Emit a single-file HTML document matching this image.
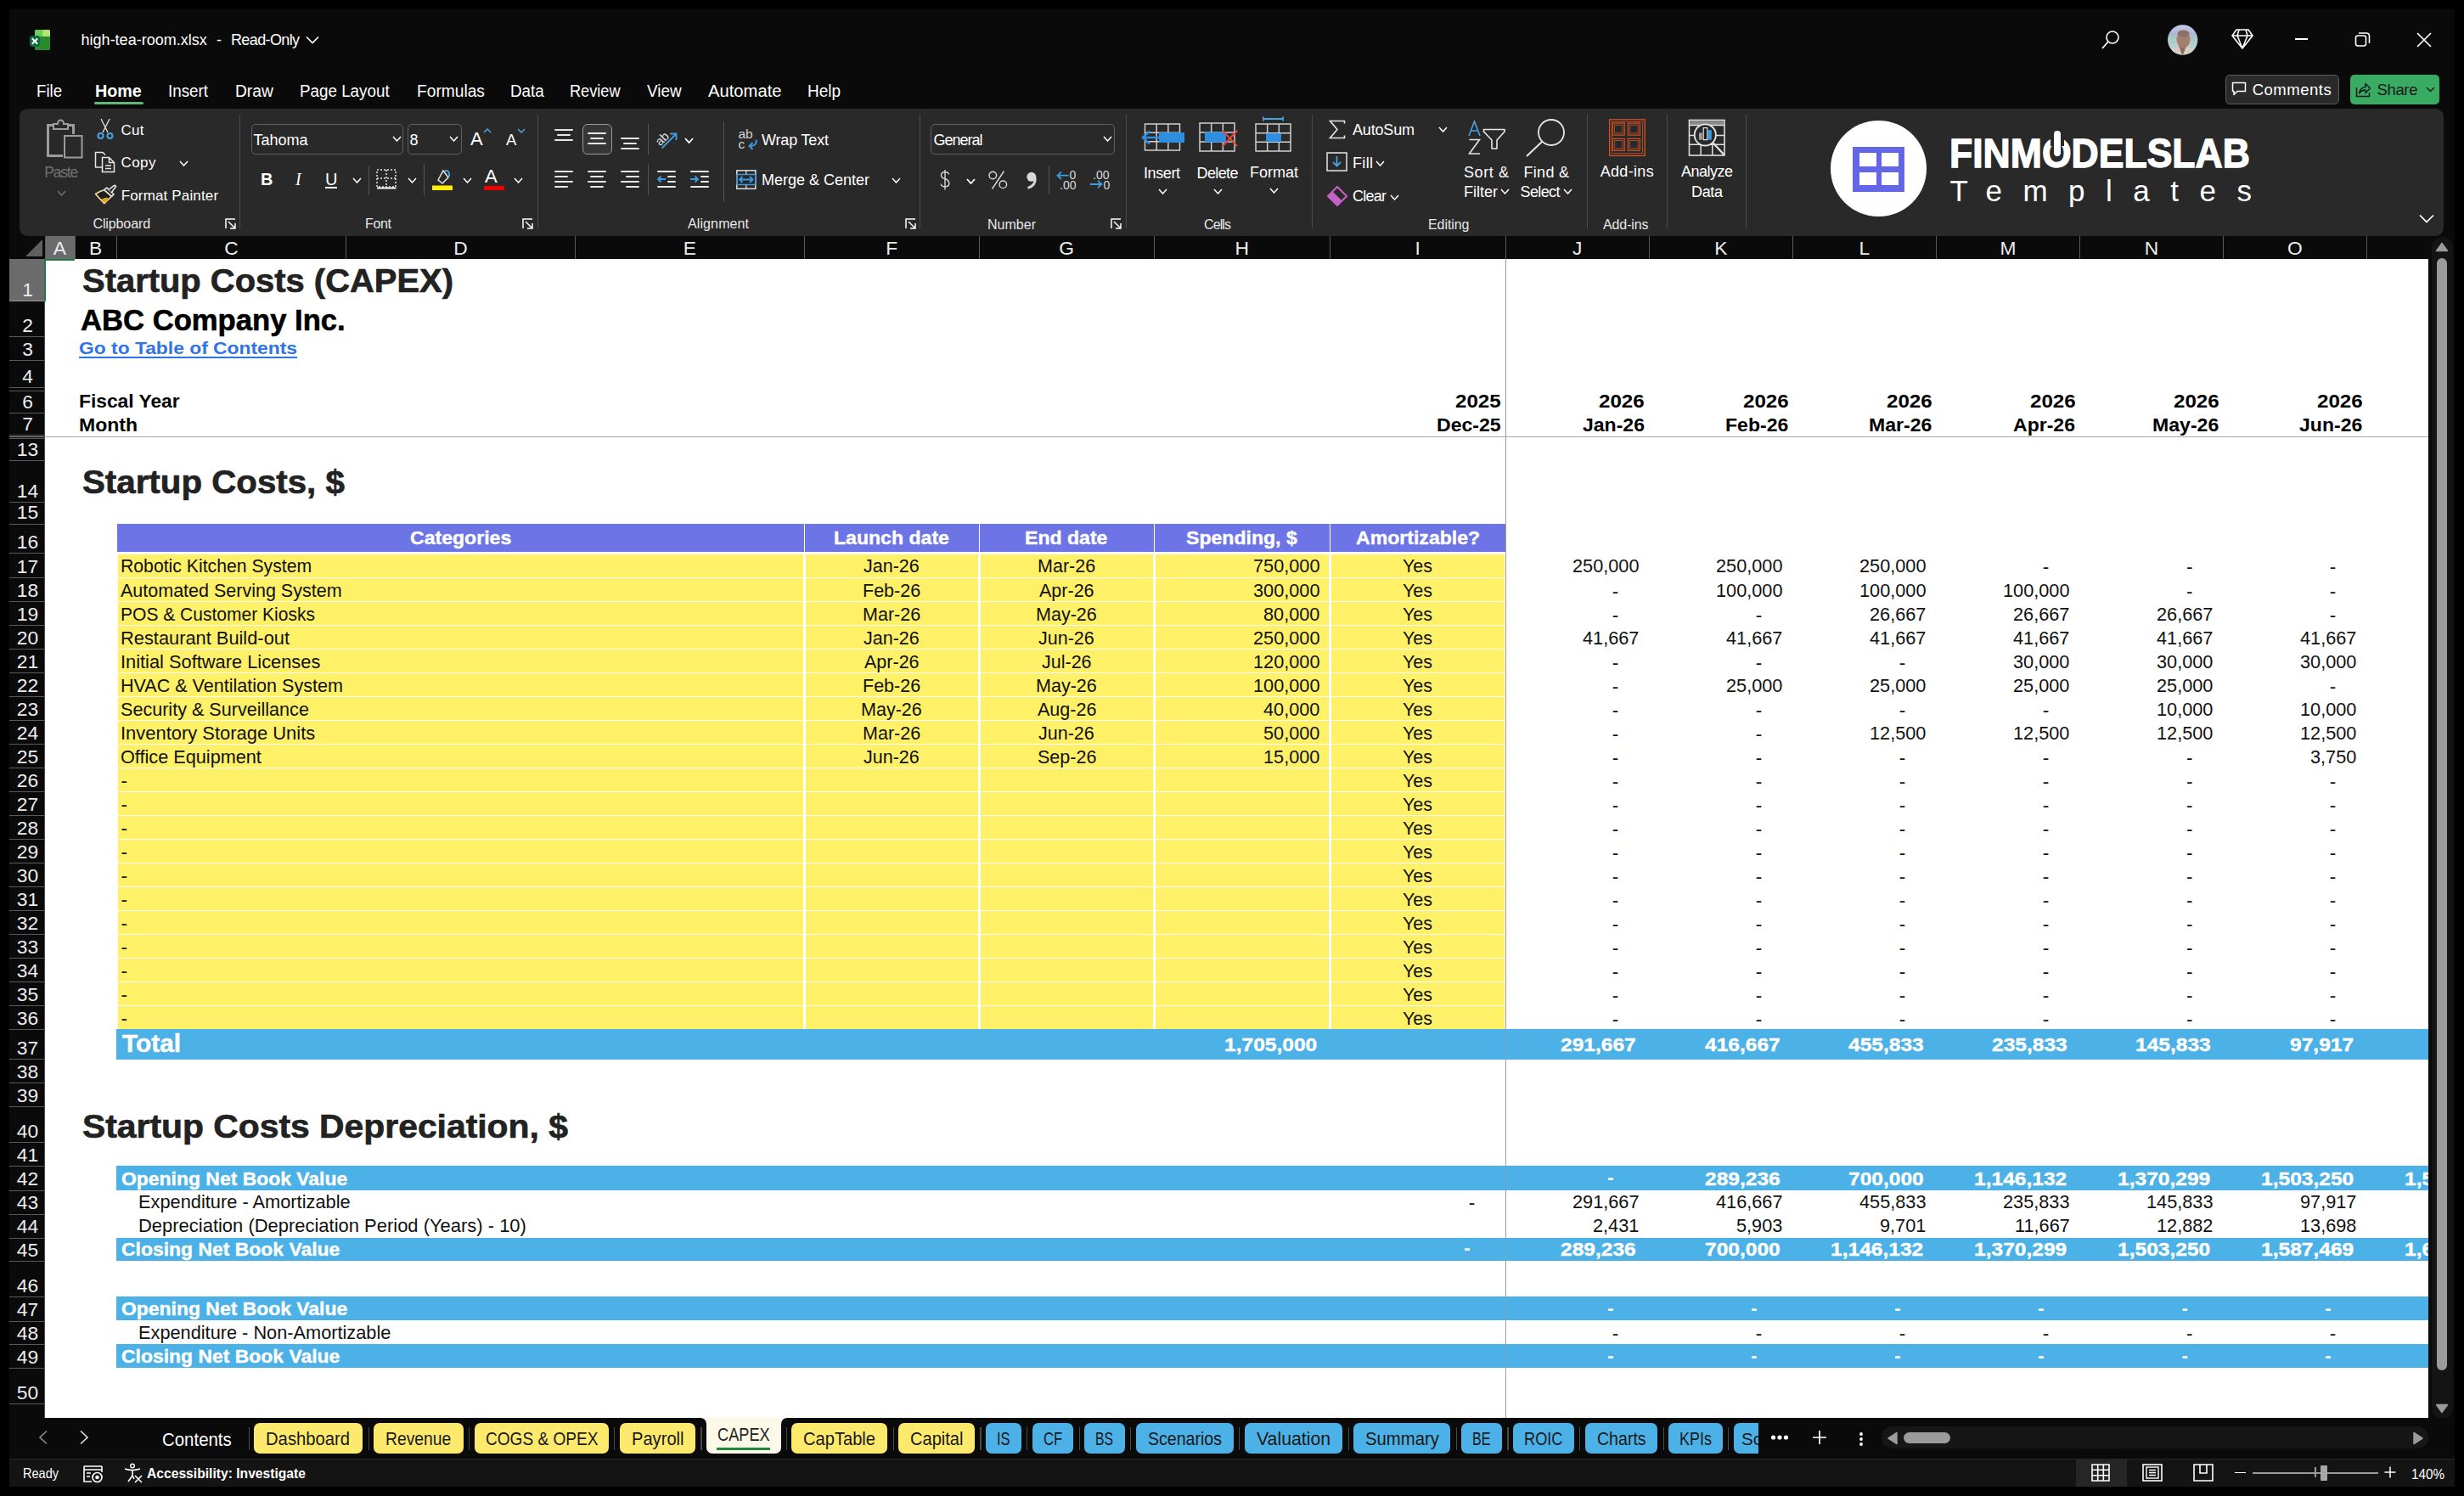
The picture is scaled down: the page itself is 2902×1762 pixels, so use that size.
<!DOCTYPE html>
<html><head><meta charset="utf-8"><title>high-tea-room.xlsx</title>
<style>
html,body{margin:0;padding:0;width:2902px;height:1762px;overflow:hidden;background:#000;}
body{position:relative;font-family:"Liberation Sans",sans-serif;}
div,svg{position:absolute;box-sizing:border-box;}
.t{white-space:pre;line-height:1;}
</style></head><body>
<div style="left:11px;top:11px;width:2880px;height:1740px;background:#0a0a0a;"></div>
<svg style="left:34px;top:34px;" width="26" height="26" viewBox="0 0 26 26">
<rect x="7" y="1" width="18" height="24" rx="2" fill="#21a366"/>
<rect x="7" y="1" width="9" height="8" rx="1.5" fill="#6ad05a"/>
<rect x="16" y="1" width="9" height="8" rx="1.5" fill="#b6e56a"/>
<rect x="7" y="9" width="18" height="16" rx="1.5" fill="#2a8a2e"/>
<rect x="1" y="8" width="12" height="13" rx="3" fill="#0e6b3c"/>
<path d="M3.8 11.2 L10.2 17.8 M10.2 11.2 L3.8 17.8" stroke="#fff" stroke-width="2"/>
</svg>
<div class="t" style="top:38.3px;font-size:18px;color:#fff;letter-spacing:-0px;left:95.6px;">high-tea-room.xlsx</div>
<div class="t" style="top:38.3px;font-size:18px;color:#fff;left:255px;">-</div>
<div class="t" style="top:38.3px;font-size:18px;color:#fff;letter-spacing:-0.63px;left:272px;">Read-Only</div>
<svg style="left:360px;top:42px;" width="16" height="10" viewBox="0 0 16 10"><path d="M1 1.5 L8 8.5 L15 1.5" stroke="#fff" stroke-width="1.6" fill="none"/></svg>
<svg style="left:2474px;top:35px;" width="24" height="24" viewBox="0 0 24 24"><circle cx="14" cy="9" r="7" stroke="#fff" stroke-width="1.6" fill="none"/><path d="M9 14 L2 22" stroke="#fff" stroke-width="1.8"/></svg>
<svg style="left:2552px;top:29px;" width="37" height="37" viewBox="0 0 37 37"><defs><clipPath id="avc"><circle cx="18.7" cy="17.9" r="17.7"/></clipPath><linearGradient id="av" x1="0" y1="0" x2="0" y2="1"><stop offset="0" stop-color="#c8cce6"/><stop offset="0.3" stop-color="#a9b6d8"/><stop offset="0.36" stop-color="#a6c4c8"/><stop offset="1" stop-color="#c9dcd8"/></linearGradient></defs>
<g clip-path="url(#avc)"><rect width="37" height="37" fill="url(#av)"/><path d="M2 37 Q6 27 14 26 L24 26 Q32 28 36 37 Z" fill="#d8cec4"/><path d="M14 25 L18.5 37 L23 25 Z" fill="#8a6a5c"/><ellipse cx="19.5" cy="17.5" rx="8" ry="10" fill="#a47f70"/><ellipse cx="19.5" cy="10.5" rx="7" ry="4" fill="#8c7068"/></g></svg>
<svg style="left:2628px;top:33px;" width="26" height="26" viewBox="0 0 26 26"><path d="M6 2 H20 L25 9 L13 24 L1 9 Z M1 9 H25 M9 2 L7 9 L13 24 L19 9 L17 2" stroke="#fff" stroke-width="1.6" fill="none" stroke-linejoin="round"/></svg>
<div style="left:2703px;top:45px;width:15px;height:1.8px;background:#fff;"></div>
<svg style="left:2773px;top:37px;" width="19" height="19" viewBox="0 0 19 19"><rect x="1.5" y="5" width="12" height="12" rx="2.5" stroke="#fff" stroke-width="1.6" fill="none"/><path d="M5 2 H14 Q17.5 2 17.5 5.5 V14" stroke="#fff" stroke-width="1.6" fill="none"/></svg>
<svg style="left:2846px;top:38px;" width="18" height="18" viewBox="0 0 18 18"><path d="M1 1 L17 17 M17 1 L1 17" stroke="#fff" stroke-width="1.7"/></svg>
<div class="t" style="top:98.42px;font-size:19.5px;color:#fff;transform:scaleX(0.9556);transform-origin:0 0;left:42.6px;">File</div>
<div class="t" style="top:98.42px;font-size:19.5px;color:#fff;font-weight:700;transform:scaleX(1.0109);transform-origin:0 0;left:111.6px;">Home</div>
<div class="t" style="top:98.42px;font-size:19.5px;color:#fff;transform:scaleX(0.9641);transform-origin:0 0;left:198px;">Insert</div>
<div class="t" style="top:98.42px;font-size:19.5px;color:#fff;transform:scaleX(0.9839);transform-origin:0 0;left:277px;">Draw</div>
<div class="t" style="top:98.42px;font-size:19.5px;color:#fff;transform:scaleX(0.9644);transform-origin:0 0;left:353px;">Page Layout</div>
<div class="t" style="top:98.42px;font-size:19.5px;color:#fff;transform:scaleX(0.9838);transform-origin:0 0;left:491px;">Formulas</div>
<div class="t" style="top:98.42px;font-size:19.5px;color:#fff;transform:scaleX(0.9650);transform-origin:0 0;left:600.6px;">Data</div>
<div class="t" style="top:98.42px;font-size:19.5px;color:#fff;transform:scaleX(0.9318);transform-origin:0 0;left:670.9px;">Review</div>
<div class="t" style="top:98.42px;font-size:19.5px;color:#fff;transform:scaleX(0.9684);transform-origin:0 0;left:762px;">View</div>
<div class="t" style="top:98.42px;font-size:19.5px;color:#fff;transform:scaleX(1.0364);transform-origin:0 0;left:834px;">Automate</div>
<div class="t" style="top:98.42px;font-size:19.5px;color:#fff;transform:scaleX(0.9732);transform-origin:0 0;left:951px;">Help</div>
<div style="left:111px;top:120px;width:57.5px;height:3px;background:#5fb77c;border-radius:2px;"></div>
<div style="left:2621px;top:87.5px;width:134px;height:35px;background:#2a2a2a;border:1px solid #5c5c5c;border-radius:5px;"></div>
<svg style="left:2628px;top:96px;" width="19" height="18" viewBox="0 0 19 18"><path d="M1.5 1.5 H16.5 V11.5 H7 L3 15.5 V11.5 H1.5 Z" stroke="#fff" stroke-width="1.5" fill="none" stroke-linejoin="round"/></svg>
<div class="t" style="top:96.88px;font-size:18.5px;color:#fff;letter-spacing:0.51px;left:2652.7px;">Comments</div>
<div style="left:2768px;top:87.5px;width:105px;height:35px;background:#3aab62;border-radius:5px;"></div>
<svg style="left:2774px;top:96px;" width="19" height="19" viewBox="0 0 19 19"><path d="M1.5 7 V17.5 H16.5 V13" stroke="#1a1a1a" stroke-width="1.5" fill="none"/><path d="M4.5 14 Q6 7 12 6.5 V2.5 L17.5 8 L12 13.5 V10 Q7.5 10 4.5 14 Z" stroke="#1a1a1a" stroke-width="1.5" fill="none" stroke-linejoin="round"/></svg>
<div class="t" style="top:96.88px;font-size:18.5px;color:#1a1a1a;letter-spacing:-0.35px;left:2799.5px;">Share</div>
<svg style="left:2857px;top:102px;" width="11" height="7" viewBox="0 0 11 7"><path d="M1 1 L5.5 5.5 L10 1" stroke="#1a1a1a" stroke-width="1.5" fill="none"/></svg>
<div style="left:23px;top:128.3px;width:2855.4px;height:149.4px;background:#292929;border-radius:9px;"></div>
<svg style="left:54px;top:140px;" width="44" height="48" viewBox="0 0 44 48">
<path d="M2.5 7.5 H8.5 M25.5 7.5 H32.5 V18" stroke="#9c9c9c" stroke-width="3" fill="none"/>
<path d="M2.5 6 V43.5 H20" stroke="#9c9c9c" stroke-width="3" fill="none"/>
<path d="M9 12 V6 H14 Q14 1.5 17.5 1.5 Q21 1.5 21 6 H26 V12 Z" stroke="#9c9c9c" stroke-width="2" fill="#292929"/>
<rect x="22" y="20" width="20.5" height="25.5" stroke="#9c9c9c" stroke-width="2" fill="#292929"/></svg>
<div class="t" style="top:195.32px;font-size:17.5px;color:#717171;letter-spacing:-1.18px;left:52.2px;">Paste</div>
<svg style="left:66.5px;top:223.5px;" width="11" height="7" viewBox="0 0 11 7"><path d="M1 1 L5.5 6 L10 1" stroke="#717171" stroke-width="1.5" fill="none"/></svg>
<svg style="left:113px;top:138px;" width="22" height="28" viewBox="0 0 22 28"><path d="M6 2 L14 18 M16 2 L8 18" stroke="#e6e6e6" stroke-width="1.3"/>
<circle cx="5.5" cy="22" r="3" stroke="#4aa3e2" stroke-width="2" fill="none"/><circle cx="16.5" cy="22" r="3" stroke="#4aa3e2" stroke-width="2" fill="none"/></svg>
<div class="t" style="top:145.35px;font-size:17px;color:#fff;letter-spacing:0.28px;left:142.5px;">Cut</div>
<svg style="left:111px;top:178px;" width="26" height="27" viewBox="0 0 26 27"><path d="M10 19 H1.5 V1.5 H10 L13 4.5" stroke="#e6e6e6" stroke-width="1.5" fill="none"/>
<path d="M9.5 7.5 H17.5 L23.5 13.5 V24.5 H9.5 Z M17.5 7.5 V13.5 H23.5 M13 17 H20 M13 20.5 H20" stroke="#e6e6e6" stroke-width="1.5" fill="none"/></svg>
<div class="t" style="top:182.55px;font-size:17px;color:#fff;letter-spacing:0.43px;left:142.5px;">Copy</div>
<svg style="left:210.5px;top:189px;" width="11" height="7" viewBox="0 0 11 7"><path d="M1 1 L5.5 6 L10 1" stroke="#fff" stroke-width="1.5" fill="none"/></svg>
<svg style="left:111px;top:217px;" width="27" height="25" viewBox="0 0 27 25"><path d="M1.5 11.5 Q7 7.8 11.8 6.8 L20.5 14.2 L11.8 22.6 Z" stroke="#f7e09a" stroke-width="1.6" fill="#1e1e1e" stroke-linejoin="round"/>
<path d="M8.5 17.5 L14.5 15.5 L17.5 17.5 L12 22 Z" fill="#e9a12a"/>
<path d="M11.8 6.5 L14.8 4.2 L23 12 L20.5 14.4 Z" stroke="#e6e6e6" stroke-width="1.6" fill="#292929" stroke-linejoin="round"/>
<path d="M17 6.5 L22.8 1.8 Q24.8 0.6 25.6 2.6 L20.2 9.8" stroke="#e6e6e6" stroke-width="1.6" fill="#292929" stroke-linejoin="round"/></svg>
<div class="t" style="top:222.05px;font-size:17px;color:#fff;letter-spacing:0.15px;left:142.7px;">Format Painter</div>
<div class="t" style="top:256.4px;font-size:16px;color:#e8e8e8;letter-spacing:-0.12px;left:109.5px;">Clipboard</div>
<svg style="left:264.5px;top:256.5px;" width="14" height="13" viewBox="0 0 14 13"><path d="M1 12 V1 H12" stroke="#fff" stroke-width="1.5" fill="none"/><path d="M4 4 L12 12 M6 12 H12 V6" stroke="#fff" stroke-width="1.5" fill="none"/></svg>
<div style="left:282px;top:135px;width:1px;height:134px;background:#4c4c4c;"></div>
<div style="left:295.5px;top:146px;width:179.5px;height:35.5px;background:transparent;border:1px solid #616161;border-radius:5px;"></div>
<div class="t" style="top:156px;font-size:18px;color:#fff;letter-spacing:-0.02px;left:298.5px;">Tahoma</div>
<svg style="left:462px;top:160px;" width="11" height="7" viewBox="0 0 11 7"><path d="M1 1 L5.5 6 L10 1" stroke="#fff" stroke-width="1.5" fill="none"/></svg>
<div style="left:479.5px;top:146px;width:64px;height:35.5px;background:transparent;border:1px solid #616161;border-radius:5px;"></div>
<div class="t" style="top:156px;font-size:18px;color:#fff;left:482.5px;">8</div>
<svg style="left:529px;top:160px;" width="11" height="7" viewBox="0 0 11 7"><path d="M1 1 L5.5 6 L10 1" stroke="#fff" stroke-width="1.5" fill="none"/></svg>
<div class="t" style="top:153.3px;font-size:22px;color:#fff;left:554px;">A</div>
<svg style="left:569px;top:151px;" width="10" height="6" viewBox="0 0 10 6"><path d="M1 5 L5 1 L9 5" stroke="#4aa3e2" stroke-width="1.5" fill="none"/></svg>
<div class="t" style="top:156.28px;font-size:18.5px;color:#fff;left:596px;">A</div>
<svg style="left:609px;top:151px;" width="10" height="6" viewBox="0 0 10 6"><path d="M1 1 L5 5 L9 1" stroke="#4aa3e2" stroke-width="1.5" fill="none"/></svg>
<div class="t" style="top:201.2px;font-size:20px;color:#fff;font-weight:700;left:307px;">B</div>
<div class="t" style="top:201.2px;font-size:20px;color:#fff;left:348px;font-style:italic;font-family:\"Liberation Serif\",serif;">I</div>
<div class="t" style="top:201.2px;font-size:20px;color:#fff;left:383px;">U</div>
<div style="left:382.5px;top:220px;width:14.5px;height:1.6px;background:#fff;"></div>
<svg style="left:414.5px;top:208.5px;" width="11" height="7" viewBox="0 0 11 7"><path d="M1 1 L5.5 6 L10 1" stroke="#fff" stroke-width="1.5" fill="none"/></svg>
<div style="left:434px;top:194.5px;width:1px;height:35.5px;background:#555;"></div>
<svg style="left:443px;top:199px;" width="25" height="24" viewBox="0 0 25 24"><path d="M1 1 H23 V21 H1 Z M12 1 V21 M1 11 H23" stroke="#e6e6e6" stroke-width="1.5" stroke-dasharray="2 2" fill="none"/><path d="M1 22.5 H23.5" stroke="#fff" stroke-width="2"/></svg>
<svg style="left:479.5px;top:208.5px;" width="11" height="7" viewBox="0 0 11 7"><path d="M1 1 L5.5 6 L10 1" stroke="#fff" stroke-width="1.5" fill="none"/></svg>
<div style="left:499px;top:193px;width:1px;height:37px;background:#555;"></div>
<svg style="left:507px;top:196px;" width="30" height="30" viewBox="0 0 30 30"><path d="M9 16 L15 5 L21 13 L14 20 Z" stroke="#e6e6e6" stroke-width="1.5" fill="none"/><path d="M17 5 Q23 4 22 12" stroke="#4aa3e2" stroke-width="2" fill="none"/><rect x="2" y="22.5" width="24" height="5.5" fill="#ffee00"/></svg>
<svg style="left:544.5px;top:208.5px;" width="11" height="7" viewBox="0 0 11 7"><path d="M1 1 L5.5 6 L10 1" stroke="#fff" stroke-width="1.5" fill="none"/></svg>
<div class="t" style="top:197.3px;font-size:22px;color:#fff;left:571px;">A</div>
<div style="left:570px;top:218.5px;width:24px;height:5.5px;background:#e00;"></div>
<svg style="left:605px;top:208.5px;" width="11" height="7" viewBox="0 0 11 7"><path d="M1 1 L5.5 6 L10 1" stroke="#fff" stroke-width="1.5" fill="none"/></svg>
<div class="t" style="top:256.4px;font-size:16px;color:#e8e8e8;letter-spacing:-0.33px;left:430px;">Font</div>
<svg style="left:615px;top:256.5px;" width="14" height="13" viewBox="0 0 14 13"><path d="M1 12 V1 H12" stroke="#fff" stroke-width="1.5" fill="none"/><path d="M4 4 L12 12 M6 12 H12 V6" stroke="#fff" stroke-width="1.5" fill="none"/></svg>
<div style="left:633px;top:135px;width:1px;height:134px;background:#4c4c4c;"></div>
<div style="left:685.5px;top:146.2px;width:35.3px;height:35.4px;background:#363636;border:1px solid #9a9a9a;border-radius:6px;"></div>
<div style="left:653.2px;top:152.1px;width:21.6px;height:1.7px;background:#e6e6e6;border-radius:1px;"></div>
<div style="left:656.3px;top:158.1px;width:15.6px;height:1.7px;background:#e6e6e6;border-radius:1px;"></div>
<div style="left:653.2px;top:164.1px;width:21.6px;height:1.7px;background:#e6e6e6;border-radius:1px;"></div>
<div style="left:692.2px;top:156.3px;width:21.6px;height:1.7px;background:#e6e6e6;border-radius:1px;"></div>
<div style="left:695.3px;top:162.3px;width:15.6px;height:1.7px;background:#e6e6e6;border-radius:1px;"></div>
<div style="left:692.2px;top:168.3px;width:21.6px;height:1.7px;background:#e6e6e6;border-radius:1px;"></div>
<div style="left:731.2px;top:162.3px;width:21.6px;height:1.7px;background:#e6e6e6;border-radius:1px;"></div>
<div style="left:734.3px;top:168.3px;width:15.6px;height:1.7px;background:#e6e6e6;border-radius:1px;"></div>
<div style="left:731.2px;top:174.4px;width:21.6px;height:1.7px;background:#e6e6e6;border-radius:1px;"></div>
<div style="left:763px;top:146px;width:1px;height:35.5px;background:#555;"></div>
<svg style="left:770px;top:150px;" width="30" height="28" viewBox="0 0 30 28"><g transform="rotate(-45 11 12)"><text x="1" y="17" font-size="14.5" fill="#e0e0e0" font-family="Liberation Sans">ab</text></g><path d="M9.5 24.5 L26 8 M19 7.5 H26.5 V15" stroke="#3d9be0" stroke-width="1.9" fill="none"/></svg>
<svg style="left:806px;top:162px;" width="11" height="7" viewBox="0 0 11 7"><path d="M1 1 L5.5 6 L10 1" stroke="#fff" stroke-width="1.8" fill="none"/></svg>
<div style="left:653.2px;top:201.2px;width:21.6px;height:1.7px;background:#e6e6e6;border-radius:1px;"></div>
<div style="left:653.2px;top:207.2px;width:16px;height:1.7px;background:#e6e6e6;border-radius:1px;"></div>
<div style="left:653.2px;top:213.3px;width:21.6px;height:1.7px;background:#e6e6e6;border-radius:1px;"></div>
<div style="left:653.2px;top:219.3px;width:16px;height:1.7px;background:#e6e6e6;border-radius:1px;"></div>
<div style="left:692.2px;top:201.2px;width:21.6px;height:1.7px;background:#e6e6e6;border-radius:1px;"></div>
<div style="left:695.1px;top:207.2px;width:15.8px;height:1.7px;background:#e6e6e6;border-radius:1px;"></div>
<div style="left:692.2px;top:213.3px;width:21.6px;height:1.7px;background:#e6e6e6;border-radius:1px;"></div>
<div style="left:695.1px;top:219.3px;width:15.8px;height:1.7px;background:#e6e6e6;border-radius:1px;"></div>
<div style="left:731.2px;top:201.2px;width:21.6px;height:1.7px;background:#e6e6e6;border-radius:1px;"></div>
<div style="left:736.8px;top:207.2px;width:16px;height:1.7px;background:#e6e6e6;border-radius:1px;"></div>
<div style="left:731.2px;top:213.3px;width:21.6px;height:1.7px;background:#e6e6e6;border-radius:1px;"></div>
<div style="left:736.8px;top:219.3px;width:16px;height:1.7px;background:#e6e6e6;border-radius:1px;"></div>
<div style="left:763px;top:193px;width:1px;height:37px;background:#555;"></div>
<div style="left:774.2px;top:201.2px;width:21.6px;height:1.7px;background:#e6e6e6;border-radius:1px;"></div>
<div style="left:786.4px;top:207.2px;width:9.4px;height:1.7px;background:#e6e6e6;border-radius:1px;"></div>
<div style="left:786.4px;top:213.3px;width:9.4px;height:1.7px;background:#e6e6e6;border-radius:1px;"></div>
<div style="left:774.2px;top:219.3px;width:21.6px;height:1.7px;background:#e6e6e6;border-radius:1px;"></div>
<svg style="left:773px;top:206px;" width="12" height="10" viewBox="0 0 12 10"><path d="M11 5 H2 M5.5 1.5 L2 5 L5.5 8.5" stroke="#3d9be0" stroke-width="1.9" fill="none"/></svg>
<div style="left:813.2px;top:201.2px;width:21.6px;height:1.7px;background:#e6e6e6;border-radius:1px;"></div>
<div style="left:825.3px;top:207.2px;width:9.6px;height:1.7px;background:#e6e6e6;border-radius:1px;"></div>
<div style="left:825.3px;top:213.3px;width:9.6px;height:1.7px;background:#e6e6e6;border-radius:1px;"></div>
<div style="left:813.2px;top:219.3px;width:21.6px;height:1.7px;background:#e6e6e6;border-radius:1px;"></div>
<svg style="left:811.5px;top:206px;" width="12" height="10" viewBox="0 0 12 10"><path d="M1 5 H10 M6.5 1.5 L10 5 L6.5 8.5" stroke="#3d9be0" stroke-width="1.9" fill="none"/></svg>
<div style="left:851.5px;top:143px;width:1px;height:95px;background:#555;"></div>
<svg style="left:867px;top:148px;" width="28" height="30" viewBox="0 0 28 30"><text x="2.5" y="15.2" font-size="15.5" fill="#d6d6d6" font-family="Liberation Sans">ab</text><text x="2.5" y="26.5" font-size="15.5" fill="#d6d6d6" font-family="Liberation Sans">c</text><path d="M23.5 16.5 Q25 24 16 24 M19.5 20 L15.5 24 L19.5 28" stroke="#3d9be0" stroke-width="1.9" fill="none"/></svg>
<div class="t" style="top:155.7px;font-size:18px;color:#fff;letter-spacing:-0.17px;left:897px;">Wrap Text</div>
<svg style="left:866px;top:199px;" width="26" height="25" viewBox="0 0 26 25"><rect x="1.8" y="1.8" width="22" height="21.5" stroke="#d6d6d6" stroke-width="1.6" fill="none"/><path d="M12.8 1.8 V6 M12.8 18.5 V23" stroke="#d6d6d6" stroke-width="1.4"/><path d="M1.8 6.5 H23.8 M1.8 18.5 H23.8" stroke="#3d9be0" stroke-width="1.6"/><path d="M1.8 6.5 V18.5 M23.8 6.5 V18.5" stroke="#3d9be0" stroke-width="1.6"/><path d="M5 12.5 H20.5 M8.5 9 L5 12.5 L8.5 16 M17 9 L20.5 12.5 L17 16" stroke="#3d9be0" stroke-width="1.8" fill="none"/></svg>
<div class="t" style="top:203.2px;font-size:18px;color:#fff;letter-spacing:-0.01px;left:897px;">Merge &amp; Center</div>
<svg style="left:1049.5px;top:208.5px;" width="11" height="7" viewBox="0 0 11 7"><path d="M1 1 L5.5 6 L10 1" stroke="#fff" stroke-width="1.5" fill="none"/></svg>
<div class="t" style="top:256.4px;font-size:16px;color:#e8e8e8;letter-spacing:0.11px;left:810px;">Alignment</div>
<svg style="left:1065.5px;top:256.5px;" width="14" height="13" viewBox="0 0 14 13"><path d="M1 12 V1 H12" stroke="#fff" stroke-width="1.5" fill="none"/><path d="M4 4 L12 12 M6 12 H12 V6" stroke="#fff" stroke-width="1.5" fill="none"/></svg>
<div style="left:1083px;top:135px;width:1px;height:134px;background:#4c4c4c;"></div>
<div style="left:1096px;top:146px;width:217px;height:35.5px;background:transparent;border:1px solid #616161;border-radius:5px;"></div>
<div class="t" style="top:156px;font-size:18px;color:#fff;letter-spacing:-1.01px;left:1099.5px;">General</div>
<svg style="left:1299px;top:160px;" width="11" height="7" viewBox="0 0 11 7"><path d="M1 1 L5.5 6 L10 1" stroke="#fff" stroke-width="1.5" fill="none"/></svg>
<svg style="left:1105px;top:199px;" width="16" height="26" viewBox="0 0 16 26"><path d="M12.5 6.5 Q12 3.5 8 3.5 Q3.5 3.5 3.5 7.3 Q3.5 10.5 8 11.8 Q12.8 13 12.8 17 Q12.8 20.8 8 20.8 Q3.6 20.8 3.2 17.5 M8 1 V24.5" stroke="#d8d8d8" stroke-width="1.4" fill="none"/></svg>
<svg style="left:1137.5px;top:210px;" width="11" height="7" viewBox="0 0 11 7"><path d="M1 1 L5.5 6 L10 1" stroke="#fff" stroke-width="1.8" fill="none"/></svg>
<svg style="left:1163px;top:200px;" width="25" height="24" viewBox="0 0 25 24"><circle cx="6.3" cy="6.5" r="4.3" stroke="#d8d8d8" stroke-width="1.4" fill="none"/><circle cx="18.3" cy="17.3" r="4.3" stroke="#d8d8d8" stroke-width="1.4" fill="none"/><path d="M19.5 1.5 L5.5 22.5" stroke="#d8d8d8" stroke-width="1.4"/></svg>
<svg style="left:1207px;top:201px;" width="16" height="23" viewBox="0 0 16 23"><circle cx="7.8" cy="7.3" r="5.5" fill="#d8d8d8"/><path d="M12.3 8.5 Q13 17.5 3.5 20.5" stroke="#d8d8d8" stroke-width="2.8" fill="none"/></svg>
<div style="left:1235px;top:195px;width:1px;height:34px;background:#555;"></div>
<svg style="left:1243px;top:199px;" width="27" height="26" viewBox="0 0 27 26"><text x="16.5" y="11.5" font-size="14" fill="#d8d8d8" font-family="Liberation Sans">0</text><text x="5" y="23.5" font-size="14" fill="#d8d8d8" font-family="Liberation Sans">.00</text><path d="M15.5 7.7 H3 M7 3.5 L2.5 7.7 L7 12" stroke="#3d9be0" stroke-width="1.8" fill="none"/></svg>
<svg style="left:1282px;top:199px;" width="27" height="26" viewBox="0 0 27 26"><text x="5" y="11.5" font-size="14" fill="#d8d8d8" font-family="Liberation Sans">.00</text><text x="17.5" y="23.5" font-size="14" fill="#d8d8d8" font-family="Liberation Sans">0</text><path d="M1.8 18 H15 M11 13.8 L15.5 18 L11 22.2" stroke="#3d9be0" stroke-width="1.8" fill="none"/></svg>
<div class="t" style="top:256.9px;font-size:16px;color:#e8e8e8;letter-spacing:0.02px;left:1163px;">Number</div>
<svg style="left:1308px;top:256.5px;" width="14" height="13" viewBox="0 0 14 13"><path d="M1 12 V1 H12" stroke="#fff" stroke-width="1.5" fill="none"/><path d="M4 4 L12 12 M6 12 H12 V6" stroke="#fff" stroke-width="1.5" fill="none"/></svg>
<div style="left:1326px;top:135px;width:1px;height:134px;background:#4c4c4c;"></div>
<svg style="left:1343px;top:144px;" width="52" height="36" viewBox="0 0 52 36"><g transform="translate(4.5,1)"><rect x="1" y="1" width="41" height="31" stroke="#d0d0d0" stroke-width="1.5" fill="none"/><path d="M14.67 1 V32" stroke="#d0d0d0" stroke-width="1.5"/><path d="M28.33 1 V32" stroke="#d0d0d0" stroke-width="1.5"/><path d="M1 11.33 H42" stroke="#d0d0d0" stroke-width="1.5"/><path d="M1 21.67 H42" stroke="#d0d0d0" stroke-width="1.5"/></g><rect x="22" y="12" width="30" height="12" fill="#2e8fe0"/><path d="M28 18 H4 M11 10.5 L3 18 L11 25.5" stroke="#2e8fe0" stroke-width="2.6" fill="none"/></svg>
<div class="t" style="top:194.7px;font-size:18px;color:#fff;letter-spacing:-0.4px;left:1347px;">Insert</div>
<svg style="left:1364px;top:222px;" width="11" height="7" viewBox="0 0 11 7"><path d="M1 1 L5.5 6 L10 1" stroke="#fff" stroke-width="1.5" fill="none"/></svg>
<svg style="left:1412px;top:144px;" width="47" height="36" viewBox="0 0 47 36"><rect x="1" y="1" width="41" height="33" stroke="#d0d0d0" stroke-width="1.5" fill="none"/><path d="M14.67 1 V34" stroke="#d0d0d0" stroke-width="1.5"/><path d="M28.33 1 V34" stroke="#d0d0d0" stroke-width="1.5"/><path d="M1 12 H42" stroke="#d0d0d0" stroke-width="1.5"/><path d="M1 23 H42" stroke="#d0d0d0" stroke-width="1.5"/><rect x="7" y="11.5" width="25" height="12" fill="#2e8fe0"/><path d="M28 10 L45 28 M45 10 L28 28" stroke="#e8453c" stroke-width="2"/></svg>
<div class="t" style="top:194.7px;font-size:18px;color:#fff;letter-spacing:-0.6px;left:1409.5px;">Delete</div>
<svg style="left:1429px;top:222px;" width="11" height="7" viewBox="0 0 11 7"><path d="M1 1 L5.5 6 L10 1" stroke="#fff" stroke-width="1.5" fill="none"/></svg>
<svg style="left:1478px;top:137px;" width="44" height="43" viewBox="0 0 44 43"><path d="M10 3 H33 M10 0.5 V5.5 M33 0.5 V5.5" stroke="#4aa3e2" stroke-width="1.8"/><g transform="translate(0,8)"><rect x="1" y="1" width="41" height="32" stroke="#d0d0d0" stroke-width="1.5" fill="none"/><path d="M14.67 1 V33" stroke="#d0d0d0" stroke-width="1.5"/><path d="M28.33 1 V33" stroke="#d0d0d0" stroke-width="1.5"/><path d="M1 11.67 H42" stroke="#d0d0d0" stroke-width="1.5"/><path d="M1 22.33 H42" stroke="#d0d0d0" stroke-width="1.5"/><rect x="13" y="12" width="18" height="10" fill="#2e8fe0"/></g></svg>
<div class="t" style="top:193.7px;font-size:18px;color:#fff;letter-spacing:0.01px;left:1472px;">Format</div>
<svg style="left:1495px;top:221px;" width="11" height="7" viewBox="0 0 11 7"><path d="M1 1 L5.5 6 L10 1" stroke="#fff" stroke-width="1.5" fill="none"/></svg>
<div class="t" style="top:257.4px;font-size:16px;color:#e8e8e8;letter-spacing:-0.9px;left:1418px;">Cells</div>
<div style="left:1544.5px;top:135px;width:1px;height:134px;background:#4c4c4c;"></div>
<svg style="left:1564px;top:141px;" width="22" height="23" viewBox="0 0 22 23"><path d="M19.5 4.5 V1.5 H2.5 L11 11.5 L2.5 21.5 H19.5 V18.5" stroke="#e6e6e6" stroke-width="1.6" fill="none" stroke-linejoin="miter"/></svg>
<div class="t" style="top:144.2px;font-size:18px;color:#fff;letter-spacing:-0.18px;left:1593px;">AutoSum</div>
<svg style="left:1693.5px;top:149px;" width="11" height="7" viewBox="0 0 11 7"><path d="M1 1 L5.5 6 L10 1" stroke="#fff" stroke-width="1.5" fill="none"/></svg>
<svg style="left:1562px;top:179px;" width="26" height="24" viewBox="0 0 26 24"><rect x="1" y="1" width="23" height="21" stroke="#e6e6e6" stroke-width="1.5" fill="none"/><path d="M12.5 5 V16 M8 12 L12.5 16.5 L17 12" stroke="#4aa3e2" stroke-width="1.8" fill="none"/></svg>
<div class="t" style="top:182.7px;font-size:18px;color:#fff;letter-spacing:0.35px;left:1593px;">Fill</div>
<svg style="left:1620px;top:189px;" width="11" height="7" viewBox="0 0 11 7"><path d="M1 1 L5.5 6 L10 1" stroke="#fff" stroke-width="1.5" fill="none"/></svg>
<svg style="left:1562px;top:218px;" width="26" height="25" viewBox="0 0 26 25"><path d="M2 13 L13 2 L24 13 L13 24 Z" stroke="#c561c5" stroke-width="2" fill="none"/><path d="M2 13 L7.5 7.5 L18.5 18.5 L13 24 Z" fill="#c561c5"/></svg>
<div class="t" style="top:222.2px;font-size:18px;color:#fff;letter-spacing:-0.76px;left:1593px;">Clear</div>
<svg style="left:1637px;top:228.5px;" width="11" height="7" viewBox="0 0 11 7"><path d="M1 1 L5.5 6 L10 1" stroke="#fff" stroke-width="1.5" fill="none"/></svg>
<svg style="left:1727px;top:140px;" width="48" height="45" viewBox="0 0 48 45"><path d="M3 20 L9.5 3 L16 20 M5.5 14 H13.5" stroke="#4aa3e2" stroke-width="1.6" fill="none"/><path d="M3.5 24.5 H15.5 L3.5 41 H16" stroke="#e6e6e6" stroke-width="1.6" fill="none"/>
<path d="M20.5 12.5 H45 V15 L36 25 V35 H30 V25 L20.5 15 Z" stroke="#e6e6e6" stroke-width="1.6" fill="none" stroke-linejoin="round"/></svg>
<div class="t" style="top:193.7px;font-size:18px;color:#fff;letter-spacing:0.59px;left:1724px;">Sort &amp;</div>
<div class="t" style="top:216.7px;font-size:18px;color:#fff;letter-spacing:0.01px;left:1724px;">Filter</div>
<svg style="left:1767px;top:222px;" width="11" height="7" viewBox="0 0 11 7"><path d="M1 1 L5.5 6 L10 1" stroke="#fff" stroke-width="1.5" fill="none"/></svg>
<svg style="left:1796px;top:139px;" width="49" height="47" viewBox="0 0 49 47"><circle cx="31" cy="17" r="15" stroke="#e6e6e6" stroke-width="1.8" fill="none"/><path d="M20 28 L2 45" stroke="#e6e6e6" stroke-width="2"/></svg>
<div class="t" style="top:193.7px;font-size:18px;color:#fff;letter-spacing:0.3px;left:1794.5px;">Find &amp;</div>
<div class="t" style="top:216.7px;font-size:18px;color:#fff;letter-spacing:-0.61px;left:1790.5px;">Select</div>
<svg style="left:1841px;top:222px;" width="11" height="7" viewBox="0 0 11 7"><path d="M1 1 L5.5 6 L10 1" stroke="#fff" stroke-width="1.5" fill="none"/></svg>
<div class="t" style="top:257.4px;font-size:16px;color:#e8e8e8;letter-spacing:-0.08px;left:1682px;">Editing</div>
<div style="left:1868.5px;top:135px;width:1px;height:134px;background:#4c4c4c;"></div>
<svg style="left:1894px;top:139px;" width="45" height="46" viewBox="0 0 45 46"><rect x="1.6" y="1.8" width="41.6" height="42.6" stroke="#d0552b" stroke-width="1.3" fill="none"/><rect x="4.3" y="4.5" width="36.2" height="37.2" stroke="#b8461f" stroke-width="1" fill="none"/><rect x="5.2" y="6.1" width="14" height="14" stroke="#d0552b" stroke-width="1.15" fill="none"/><rect x="7.4" y="8.3" width="9.6" height="9.6" stroke="#b8461f" stroke-width="1" fill="none"/><rect x="23.4" y="6.1" width="14" height="14" stroke="#d0552b" stroke-width="1.15" fill="none"/><rect x="25.599999999999998" y="8.3" width="9.6" height="9.6" stroke="#b8461f" stroke-width="1" fill="none"/><rect x="5.2" y="24.3" width="14" height="14" stroke="#d0552b" stroke-width="1.15" fill="none"/><rect x="7.4" y="26.5" width="9.6" height="9.6" stroke="#b8461f" stroke-width="1" fill="none"/><rect x="23.4" y="24.3" width="14" height="14" stroke="#d0552b" stroke-width="1.15" fill="none"/><rect x="25.599999999999998" y="26.5" width="9.6" height="9.6" stroke="#b8461f" stroke-width="1" fill="none"/></svg>
<div class="t" style="top:192.7px;font-size:18px;color:#fff;letter-spacing:0.33px;left:1884.7px;">Add-ins</div>
<div class="t" style="top:257.4px;font-size:16px;color:#e8e8e8;letter-spacing:-0.11px;left:1888px;">Add-ins</div>
<div style="left:1963px;top:135px;width:1px;height:134px;background:#4c4c4c;"></div>
<svg style="left:1988px;top:140px;" width="45" height="45" viewBox="0 0 45 45"><rect x="1.5" y="1.5" width="41.5" height="41.5" stroke="#e0e0e0" stroke-width="1.6" fill="none"/><rect x="2.3" y="2.3" width="40" height="4.6" fill="#8a8a8a"/>
<path d="M1.5 7.6 H43 M1.5 19.5 H43 M1.5 30.2 H43 M15.2 30.2 V43 M28.8 30.2 V43" stroke="#e0e0e0" stroke-width="1.5"/>
<circle cx="20.3" cy="18.9" r="12.6" stroke="#e6e6e6" stroke-width="1.8" fill="#292929"/><path d="M29.3 28 L42.3 42" stroke="#e6e6e6" stroke-width="2.2"/>
<rect x="13" y="16.4" width="3.8" height="8.2" fill="#a0a0a0"/><rect x="18.2" y="10.6" width="4.6" height="14" stroke="#e6e6e6" stroke-width="1.2" fill="#1e1e1e"/><rect x="23.4" y="13.2" width="4.4" height="11.4" fill="#3d9be0"/></svg>
<div class="t" style="top:193.2px;font-size:18px;color:#fff;letter-spacing:-0.51px;left:1980px;">Analyze</div>
<div class="t" style="top:217.2px;font-size:18px;color:#fff;letter-spacing:-0.36px;left:1992px;">Data</div>
<div style="left:2056px;top:135px;width:1px;height:134px;background:#4c4c4c;"></div>
<div style="left:2156px;top:142.3px;width:112.5px;height:112.5px;background:#fff;border-radius:50%;"></div>
<div style="left:2181.8px;top:172.8px;width:61px;height:53px;background:#6466e8;"></div>
<div style="left:2190px;top:180px;width:19.5px;height:15.5px;background:#fff;"></div>
<div style="left:2216px;top:180px;width:19.5px;height:15.5px;background:#fff;"></div>
<div style="left:2190px;top:202.5px;width:19.5px;height:15.5px;background:#fff;"></div>
<div style="left:2216px;top:202.5px;width:19.5px;height:15.5px;background:#fff;"></div>
<div class="t" style="top:155.85px;font-size:49px;color:#fff;font-weight:700;transform:scaleX(0.9093);transform-origin:0 0;left:2296px;-webkit-text-stroke:1.4px #fff;">FINMODELSLAB</div>
<div style="left:2414.5px;top:159px;width:16px;height:13px;background:#292929;"></div>
<div style="left:2418.5px;top:153.5px;width:8px;height:30px;background:#fff;border-radius:4px;"></div>
<div class="t" style="top:206.95px;font-size:35px;color:#fff;letter-spacing:24.49px;left:2296.5px;">Templates</div>
<svg style="left:2849px;top:252px;" width="18" height="11" viewBox="0 0 18 11"><path d="M1 1.5 L9 9.5 L17 1.5" stroke="#fff" stroke-width="1.7" fill="none"/></svg>
<div style="left:53px;top:305px;width:2807px;height:1365px;background:#fff;"></div>
<div style="left:11px;top:278px;width:2851px;height:27px;background:#0a0a0a;"></div>
<svg style="left:29px;top:281px;" width="22" height="22" viewBox="0 0 22 22"><path d="M21 1 V21 H1 Z" fill="#5f5f5f"/></svg>
<div style="left:53px;top:278px;width:35px;height:27px;background:#6b6b6b;"></div>
<div style="left:88px;top:278px;width:1px;height:27px;background:#5a5a5a;"></div>
<div class="t" style="top:280.82px;font-size:22.8px;color:#ececec;left:62.86px;">A</div>
<div style="left:137px;top:278px;width:1px;height:27px;background:#5a5a5a;"></div>
<div class="t" style="top:280.82px;font-size:22.8px;color:#ececec;left:105.12px;">B</div>
<div style="left:407px;top:278px;width:1px;height:27px;background:#5a5a5a;"></div>
<div class="t" style="top:280.82px;font-size:22.8px;color:#ececec;left:264.19px;">C</div>
<div style="left:677px;top:278px;width:1px;height:27px;background:#5a5a5a;"></div>
<div class="t" style="top:280.82px;font-size:22.8px;color:#ececec;left:534.19px;">D</div>
<div style="left:947px;top:278px;width:1px;height:27px;background:#5a5a5a;"></div>
<div class="t" style="top:280.82px;font-size:22.8px;color:#ececec;left:804.82px;">E</div>
<div style="left:1153px;top:278px;width:1px;height:27px;background:#5a5a5a;"></div>
<div class="t" style="top:280.82px;font-size:22.8px;color:#ececec;left:1043.35px;">F</div>
<div style="left:1359px;top:278px;width:1px;height:27px;background:#5a5a5a;"></div>
<div class="t" style="top:280.82px;font-size:22.8px;color:#ececec;left:1247.31px;">G</div>
<div style="left:1566px;top:278px;width:1px;height:27px;background:#5a5a5a;"></div>
<div class="t" style="top:280.82px;font-size:22.8px;color:#ececec;left:1454.59px;">H</div>
<div style="left:1773px;top:278px;width:1px;height:27px;background:#5a5a5a;"></div>
<div class="t" style="top:280.82px;font-size:22.8px;color:#ececec;left:1666.61px;">I</div>
<div style="left:1942px;top:278px;width:1px;height:27px;background:#5a5a5a;"></div>
<div class="t" style="top:280.82px;font-size:22.8px;color:#ececec;left:1852px;">J</div>
<div style="left:2111px;top:278px;width:1px;height:27px;background:#5a5a5a;"></div>
<div class="t" style="top:280.82px;font-size:22.8px;color:#ececec;left:2019.22px;">K</div>
<div style="left:2280px;top:278px;width:1px;height:27px;background:#5a5a5a;"></div>
<div class="t" style="top:280.82px;font-size:22.8px;color:#ececec;left:2189.57px;">L</div>
<div style="left:2449px;top:278px;width:1px;height:27px;background:#5a5a5a;"></div>
<div class="t" style="top:280.82px;font-size:22.8px;color:#ececec;left:2355.38px;">M</div>
<div style="left:2618px;top:278px;width:1px;height:27px;background:#5a5a5a;"></div>
<div class="t" style="top:280.82px;font-size:22.8px;color:#ececec;left:2525.74px;">N</div>
<div style="left:2787px;top:278px;width:1px;height:27px;background:#5a5a5a;"></div>
<div class="t" style="top:280.82px;font-size:22.8px;color:#ececec;left:2694.01px;">O</div>
<div style="left:2956px;top:278px;width:1px;height:27px;background:#5a5a5a;"></div>
<div style="left:53px;top:278px;width:1px;height:27px;background:#5a5a5a;"></div>
<div style="left:11px;top:305px;width:42px;height:1365px;background:#0a0a0a;"></div>
<div style="left:11px;top:305px;width:42px;height:49.4px;background:#6b6b6b;"></div>
<div style="left:11px;top:354px;width:42px;height:1px;background:#5a5a5a;"></div>
<div class="t" style="top:329.72px;font-size:22.8px;color:#ececec;left:26.17px;">1</div>
<div style="left:11px;top:396px;width:42px;height:1px;background:#5a5a5a;"></div>
<div class="t" style="top:371.62px;font-size:22.8px;color:#ececec;left:26.17px;">2</div>
<div style="left:11px;top:424px;width:42px;height:1px;background:#5a5a5a;"></div>
<div class="t" style="top:399.62px;font-size:22.8px;color:#ececec;left:26.17px;">3</div>
<div style="left:11px;top:456px;width:42px;height:1px;background:#5a5a5a;"></div>
<div class="t" style="top:431.52px;font-size:22.8px;color:#ececec;left:26.17px;">4</div>
<div style="left:11px;top:486px;width:42px;height:1px;background:#5a5a5a;"></div>
<div class="t" style="top:461.62px;font-size:22.8px;color:#ececec;left:26.17px;">6</div>
<div style="left:11px;top:512px;width:42px;height:1px;background:#5a5a5a;"></div>
<div class="t" style="top:487.82px;font-size:22.8px;color:#ececec;left:26.17px;">7</div>
<div style="left:11px;top:542px;width:42px;height:1px;background:#5a5a5a;"></div>
<div class="t" style="top:517.82px;font-size:22.8px;color:#ececec;left:19.85px;">13</div>
<div style="left:11px;top:591px;width:42px;height:1px;background:#5a5a5a;"></div>
<div class="t" style="top:566.62px;font-size:22.8px;color:#ececec;left:19.85px;">14</div>
<div style="left:11px;top:617px;width:42px;height:1px;background:#5a5a5a;"></div>
<div class="t" style="top:592.02px;font-size:22.8px;color:#ececec;left:19.85px;">15</div>
<div style="left:11px;top:651px;width:42px;height:1px;background:#5a5a5a;"></div>
<div class="t" style="top:626.52px;font-size:22.8px;color:#ececec;left:19.85px;">16</div>
<div style="left:11px;top:680px;width:42px;height:1px;background:#5a5a5a;"></div>
<div class="t" style="top:655.72px;font-size:22.8px;color:#ececec;left:19.85px;">17</div>
<div style="left:11px;top:708px;width:42px;height:1px;background:#5a5a5a;"></div>
<div class="t" style="top:683.72px;font-size:22.8px;color:#ececec;left:19.85px;">18</div>
<div style="left:11px;top:736px;width:42px;height:1px;background:#5a5a5a;"></div>
<div class="t" style="top:711.72px;font-size:22.8px;color:#ececec;left:19.85px;">19</div>
<div style="left:11px;top:764px;width:42px;height:1px;background:#5a5a5a;"></div>
<div class="t" style="top:739.72px;font-size:22.8px;color:#ececec;left:19.85px;">20</div>
<div style="left:11px;top:792px;width:42px;height:1px;background:#5a5a5a;"></div>
<div class="t" style="top:767.72px;font-size:22.8px;color:#ececec;left:19.85px;">21</div>
<div style="left:11px;top:820px;width:42px;height:1px;background:#5a5a5a;"></div>
<div class="t" style="top:795.72px;font-size:22.8px;color:#ececec;left:19.85px;">22</div>
<div style="left:11px;top:848px;width:42px;height:1px;background:#5a5a5a;"></div>
<div class="t" style="top:823.72px;font-size:22.8px;color:#ececec;left:19.85px;">23</div>
<div style="left:11px;top:876px;width:42px;height:1px;background:#5a5a5a;"></div>
<div class="t" style="top:851.72px;font-size:22.8px;color:#ececec;left:19.85px;">24</div>
<div style="left:11px;top:904px;width:42px;height:1px;background:#5a5a5a;"></div>
<div class="t" style="top:879.72px;font-size:22.8px;color:#ececec;left:19.85px;">25</div>
<div style="left:11px;top:932px;width:42px;height:1px;background:#5a5a5a;"></div>
<div class="t" style="top:907.72px;font-size:22.8px;color:#ececec;left:19.85px;">26</div>
<div style="left:11px;top:960px;width:42px;height:1px;background:#5a5a5a;"></div>
<div class="t" style="top:935.72px;font-size:22.8px;color:#ececec;left:19.85px;">27</div>
<div style="left:11px;top:988px;width:42px;height:1px;background:#5a5a5a;"></div>
<div class="t" style="top:963.72px;font-size:22.8px;color:#ececec;left:19.85px;">28</div>
<div style="left:11px;top:1016px;width:42px;height:1px;background:#5a5a5a;"></div>
<div class="t" style="top:991.72px;font-size:22.8px;color:#ececec;left:19.85px;">29</div>
<div style="left:11px;top:1044px;width:42px;height:1px;background:#5a5a5a;"></div>
<div class="t" style="top:1019.72px;font-size:22.8px;color:#ececec;left:19.85px;">30</div>
<div style="left:11px;top:1072px;width:42px;height:1px;background:#5a5a5a;"></div>
<div class="t" style="top:1047.72px;font-size:22.8px;color:#ececec;left:19.85px;">31</div>
<div style="left:11px;top:1100px;width:42px;height:1px;background:#5a5a5a;"></div>
<div class="t" style="top:1075.72px;font-size:22.8px;color:#ececec;left:19.85px;">32</div>
<div style="left:11px;top:1128px;width:42px;height:1px;background:#5a5a5a;"></div>
<div class="t" style="top:1103.72px;font-size:22.8px;color:#ececec;left:19.85px;">33</div>
<div style="left:11px;top:1156px;width:42px;height:1px;background:#5a5a5a;"></div>
<div class="t" style="top:1131.72px;font-size:22.8px;color:#ececec;left:19.85px;">34</div>
<div style="left:11px;top:1184px;width:42px;height:1px;background:#5a5a5a;"></div>
<div class="t" style="top:1159.72px;font-size:22.8px;color:#ececec;left:19.85px;">35</div>
<div style="left:11px;top:1212px;width:42px;height:1px;background:#5a5a5a;"></div>
<div class="t" style="top:1187.72px;font-size:22.8px;color:#ececec;left:19.85px;">36</div>
<div style="left:11px;top:1247px;width:42px;height:1px;background:#5a5a5a;"></div>
<div class="t" style="top:1222.62px;font-size:22.8px;color:#ececec;left:19.85px;">37</div>
<div style="left:11px;top:1275px;width:42px;height:1px;background:#5a5a5a;"></div>
<div class="t" style="top:1250.52px;font-size:22.8px;color:#ececec;left:19.85px;">38</div>
<div style="left:11px;top:1303px;width:42px;height:1px;background:#5a5a5a;"></div>
<div class="t" style="top:1278.52px;font-size:22.8px;color:#ececec;left:19.85px;">39</div>
<div style="left:11px;top:1345px;width:42px;height:1px;background:#5a5a5a;"></div>
<div class="t" style="top:1320.62px;font-size:22.8px;color:#ececec;left:19.85px;">40</div>
<div style="left:11px;top:1373px;width:42px;height:1px;background:#5a5a5a;"></div>
<div class="t" style="top:1348.72px;font-size:22.8px;color:#ececec;left:19.85px;">41</div>
<div style="left:11px;top:1402px;width:42px;height:1px;background:#5a5a5a;"></div>
<div class="t" style="top:1376.92px;font-size:22.8px;color:#ececec;left:19.85px;">42</div>
<div style="left:11px;top:1430px;width:42px;height:1px;background:#5a5a5a;"></div>
<div class="t" style="top:1404.82px;font-size:22.8px;color:#ececec;left:19.85px;">43</div>
<div style="left:11px;top:1458px;width:42px;height:1px;background:#5a5a5a;"></div>
<div class="t" style="top:1432.82px;font-size:22.8px;color:#ececec;left:19.85px;">44</div>
<div style="left:11px;top:1485px;width:42px;height:1px;background:#5a5a5a;"></div>
<div class="t" style="top:1460.52px;font-size:22.8px;color:#ececec;left:19.85px;">45</div>
<div style="left:11px;top:1527px;width:42px;height:1px;background:#5a5a5a;"></div>
<div class="t" style="top:1502.52px;font-size:22.8px;color:#ececec;left:19.85px;">46</div>
<div style="left:11px;top:1556px;width:42px;height:1px;background:#5a5a5a;"></div>
<div class="t" style="top:1530.82px;font-size:22.8px;color:#ececec;left:19.85px;">47</div>
<div style="left:11px;top:1583px;width:42px;height:1px;background:#5a5a5a;"></div>
<div class="t" style="top:1558.72px;font-size:22.8px;color:#ececec;left:19.85px;">48</div>
<div style="left:11px;top:1611px;width:42px;height:1px;background:#5a5a5a;"></div>
<div class="t" style="top:1586.72px;font-size:22.8px;color:#ececec;left:19.85px;">49</div>
<div style="left:11px;top:1653px;width:42px;height:1px;background:#5a5a5a;"></div>
<div class="t" style="top:1628.72px;font-size:22.8px;color:#ececec;left:19.85px;">50</div>
<div style="left:11px;top:1670px;width:42px;height:1px;background:#5a5a5a;"></div>
<div style="left:11px;top:354px;width:42px;height:1.2px;background:#9a9a9a;"></div>
<div style="left:11px;top:460px;width:42px;height:1px;background:#5a5a5a;"></div>
<div style="left:11px;top:516px;width:42px;height:1px;background:#5a5a5a;"></div>
<div style="left:11px;top:514px;width:42px;height:1.2px;background:#9a9a9a;"></div>
<div style="left:52px;top:305px;width:1px;height:1365px;background:#4a4a4a;"></div>
<div style="left:53px;top:305px;width:35px;height:1.5px;background:#1f7a45;"></div>
<div style="left:52px;top:305px;width:2px;height:50px;background:#1f7a45;"></div>
<div style="left:1773px;top:305px;width:1px;height:1365px;background:#a6a6a6;"></div>
<div style="left:53px;top:514px;width:2807px;height:1px;background:#a6a6a6;"></div>
<div class="t" style="top:311.23px;font-size:39.5px;color:#222;font-weight:700;transform:scaleX(1.0108);transform-origin:0 0;left:96.6px;-webkit-text-stroke:0.7px #222;">Startup Costs (CAPEX)</div>
<div class="t" style="top:358.85px;font-size:35px;color:#000;font-weight:700;transform:scaleX(0.9895);transform-origin:0 0;left:94.6px;-webkit-text-stroke:0.6px #000;">ABC Company Inc.</div>
<div class="t" style="top:399.05px;font-size:21px;color:#2f74e6;font-weight:700;transform:scaleX(1.0869);transform-origin:0 0;left:92.7px;">Go to Table of Contents</div>
<div style="left:92.7px;top:420px;width:257px;height:2px;background:#2f74e6;"></div>
<div class="t" style="top:461.79px;font-size:22.6px;color:#000;font-weight:700;transform:scaleX(1.0081);transform-origin:0 0;left:92.9px;">Fiscal Year</div>
<div class="t" style="top:489.59px;font-size:22.6px;color:#000;font-weight:700;transform:scaleX(1.0177);transform-origin:0 0;left:92.9px;">Month</div>
<div class="t" style="top:461.69px;font-size:22.6px;color:#000;font-weight:700;transform:scaleX(1.0679);transform-origin:0 0;left:1714.4px;">2025</div>
<div class="t" style="top:489.69px;font-size:22.6px;color:#000;font-weight:700;transform:scaleX(1.0205);transform-origin:0 0;left:1692.45px;">Dec-25</div>
<div class="t" style="top:461.69px;font-size:22.6px;color:#000;font-weight:700;transform:scaleX(1.0679);transform-origin:0 0;left:1883.4px;">2026</div>
<div class="t" style="top:489.69px;font-size:22.6px;color:#000;font-weight:700;transform:scaleX(1.0196);transform-origin:0 0;left:1864.06px;">Jan-26</div>
<div class="t" style="top:461.69px;font-size:22.6px;color:#000;font-weight:700;transform:scaleX(1.0679);transform-origin:0 0;left:2052.6px;">2026</div>
<div class="t" style="top:489.69px;font-size:22.6px;color:#000;font-weight:700;transform:scaleX(1.0197);transform-origin:0 0;left:2031.98px;">Feb-26</div>
<div class="t" style="top:461.69px;font-size:22.6px;color:#000;font-weight:700;transform:scaleX(1.0679);transform-origin:0 0;left:2221.6px;">2026</div>
<div class="t" style="top:489.69px;font-size:22.6px;color:#000;font-weight:700;transform:scaleX(1.0199);transform-origin:0 0;left:2200.97px;">Mar-26</div>
<div class="t" style="top:461.69px;font-size:22.6px;color:#000;font-weight:700;transform:scaleX(1.0679);transform-origin:0 0;left:2390.6px;">2026</div>
<div class="t" style="top:489.69px;font-size:22.6px;color:#000;font-weight:700;transform:scaleX(1.0193);transform-origin:0 0;left:2371.28px;">Apr-26</div>
<div class="t" style="top:461.69px;font-size:22.6px;color:#000;font-weight:700;transform:scaleX(1.0679);transform-origin:0 0;left:2559.7px;">2026</div>
<div class="t" style="top:489.69px;font-size:22.6px;color:#000;font-weight:700;transform:scaleX(1.0212);transform-origin:0 0;left:2535.16px;">May-26</div>
<div class="t" style="top:461.69px;font-size:22.6px;color:#000;font-weight:700;transform:scaleX(1.0679);transform-origin:0 0;left:2728.5px;">2026</div>
<div class="t" style="top:489.69px;font-size:22.6px;color:#000;font-weight:700;transform:scaleX(1.0197);transform-origin:0 0;left:2707.88px;">Jun-26</div>
<div class="t" style="top:547.82px;font-size:39.5px;color:#222;font-weight:700;transform:scaleX(1.0199);transform-origin:0 0;left:96.6px;-webkit-text-stroke:0.7px #222;">Startup Costs, $</div>
<div style="left:138px;top:617px;width:1635px;height:33px;background:#6c74e6;"></div>
<div style="left:947px;top:617px;width:1px;height:33px;background:#fff;"></div>
<div style="left:1153px;top:617px;width:1px;height:33px;background:#fff;"></div>
<div style="left:1359px;top:617px;width:1px;height:33px;background:#fff;"></div>
<div style="left:1566px;top:617px;width:1px;height:33px;background:#fff;"></div>
<div class="t" style="top:622.84px;font-size:22.3px;color:#fff;font-weight:700;transform:scaleX(1.0350);transform-origin:0 0;left:482.74px;-webkit-text-stroke:0.4px #fff;">Categories</div>
<div class="t" style="top:622.84px;font-size:22.3px;color:#fff;font-weight:700;transform:scaleX(1.0350);transform-origin:0 0;left:982.33px;-webkit-text-stroke:0.4px #fff;">Launch date</div>
<div class="t" style="top:622.84px;font-size:22.3px;color:#fff;font-weight:700;transform:scaleX(1.0350);transform-origin:0 0;left:1207.44px;-webkit-text-stroke:0.4px #fff;">End date</div>
<div class="t" style="top:622.84px;font-size:22.3px;color:#fff;font-weight:700;transform:scaleX(1.0350);transform-origin:0 0;left:1397.42px;-webkit-text-stroke:0.4px #fff;">Spending, $</div>
<div class="t" style="top:622.84px;font-size:22.3px;color:#fff;font-weight:700;transform:scaleX(1.0350);transform-origin:0 0;left:1596.69px;-webkit-text-stroke:0.4px #fff;">Amortizable?</div>
<div style="left:139px;top:653px;width:1633px;height:559px;background:#fef067;"></div>
<div style="left:946px;top:650px;width:3px;height:562.5px;background:#fff;"></div>
<div style="left:1152px;top:650px;width:3px;height:562.5px;background:#fff;"></div>
<div style="left:1358px;top:650px;width:3px;height:562.5px;background:#fff;"></div>
<div style="left:1565px;top:650px;width:3px;height:562.5px;background:#fff;"></div>
<div style="left:139px;top:679.9px;width:1633px;height:1.5px;background:#fff;"></div>
<div style="left:139px;top:707.9px;width:1633px;height:1.5px;background:#fff;"></div>
<div style="left:139px;top:735.9px;width:1633px;height:1.5px;background:#fff;"></div>
<div style="left:139px;top:763.9px;width:1633px;height:1.5px;background:#fff;"></div>
<div style="left:139px;top:791.9px;width:1633px;height:1.5px;background:#fff;"></div>
<div style="left:139px;top:819.9px;width:1633px;height:1.5px;background:#fff;"></div>
<div style="left:139px;top:847.9px;width:1633px;height:1.5px;background:#fff;"></div>
<div style="left:139px;top:875.9px;width:1633px;height:1.5px;background:#fff;"></div>
<div style="left:139px;top:903.9px;width:1633px;height:1.5px;background:#fff;"></div>
<div style="left:139px;top:931.9px;width:1633px;height:1.5px;background:#fff;"></div>
<div style="left:139px;top:959.9px;width:1633px;height:1.5px;background:#fff;"></div>
<div style="left:139px;top:987.9px;width:1633px;height:1.5px;background:#fff;"></div>
<div style="left:139px;top:1015.9px;width:1633px;height:1.5px;background:#fff;"></div>
<div style="left:139px;top:1043.9px;width:1633px;height:1.5px;background:#fff;"></div>
<div style="left:139px;top:1071.9px;width:1633px;height:1.5px;background:#fff;"></div>
<div style="left:139px;top:1099.9px;width:1633px;height:1.5px;background:#fff;"></div>
<div style="left:139px;top:1127.9px;width:1633px;height:1.5px;background:#fff;"></div>
<div style="left:139px;top:1155.9px;width:1633px;height:1.5px;background:#fff;"></div>
<div style="left:139px;top:1183.9px;width:1633px;height:1.5px;background:#fff;"></div>
<div class="t" style="top:655.99px;font-size:22.6px;color:#111;transform:scaleX(0.9387);transform-origin:0 0;left:141.6px;">Robotic Kitchen System</div>
<div class="t" style="top:655.99px;font-size:22.6px;color:#111;transform:scaleX(0.9519);transform-origin:0 0;left:1017.39px;">Jan-26</div>
<div class="t" style="top:655.99px;font-size:22.6px;color:#111;transform:scaleX(0.9519);transform-origin:0 0;left:1222.1px;">Mar-26</div>
<div class="t" style="top:655.99px;font-size:22.6px;color:#111;transform:scaleX(0.9613);transform-origin:0 0;left:1475.66px;">750,000</div>
<div class="t" style="top:655.99px;font-size:22.6px;color:#111;transform:scaleX(0.9519);transform-origin:0 0;left:1652.27px;">Yes</div>
<div class="t" style="top:684.79px;font-size:22.6px;color:#111;transform:scaleX(0.9518);transform-origin:0 0;left:141.6px;">Automated Serving System</div>
<div class="t" style="top:684.79px;font-size:22.6px;color:#111;transform:scaleX(0.9519);transform-origin:0 0;left:1016.2px;">Feb-26</div>
<div class="t" style="top:684.79px;font-size:22.6px;color:#111;transform:scaleX(0.9519);transform-origin:0 0;left:1223.93px;">Apr-26</div>
<div class="t" style="top:684.79px;font-size:22.6px;color:#111;transform:scaleX(0.9613);transform-origin:0 0;left:1475.66px;">300,000</div>
<div class="t" style="top:684.79px;font-size:22.6px;color:#111;transform:scaleX(0.9519);transform-origin:0 0;left:1652.27px;">Yes</div>
<div class="t" style="top:712.79px;font-size:22.6px;color:#111;transform:scaleX(0.9305);transform-origin:0 0;left:141.6px;">POS &amp; Customer Kiosks</div>
<div class="t" style="top:712.79px;font-size:22.6px;color:#111;transform:scaleX(0.9519);transform-origin:0 0;left:1016.2px;">Mar-26</div>
<div class="t" style="top:712.79px;font-size:22.6px;color:#111;transform:scaleX(0.9519);transform-origin:0 0;left:1220.33px;">May-26</div>
<div class="t" style="top:712.79px;font-size:22.6px;color:#111;transform:scaleX(0.9613);transform-origin:0 0;left:1487.72px;">80,000</div>
<div class="t" style="top:712.79px;font-size:22.6px;color:#111;transform:scaleX(0.9519);transform-origin:0 0;left:1652.27px;">Yes</div>
<div class="t" style="top:740.79px;font-size:22.6px;color:#111;transform:scaleX(0.9660);transform-origin:0 0;left:141.6px;">Restaurant Build-out</div>
<div class="t" style="top:740.79px;font-size:22.6px;color:#111;transform:scaleX(0.9519);transform-origin:0 0;left:1017.39px;">Jan-26</div>
<div class="t" style="top:740.79px;font-size:22.6px;color:#111;transform:scaleX(0.9519);transform-origin:0 0;left:1223.29px;">Jun-26</div>
<div class="t" style="top:740.79px;font-size:22.6px;color:#111;transform:scaleX(0.9613);transform-origin:0 0;left:1475.66px;">250,000</div>
<div class="t" style="top:740.79px;font-size:22.6px;color:#111;transform:scaleX(0.9519);transform-origin:0 0;left:1652.27px;">Yes</div>
<div class="t" style="top:768.79px;font-size:22.6px;color:#111;transform:scaleX(0.9658);transform-origin:0 0;left:141.6px;">Initial Software Licenses</div>
<div class="t" style="top:768.79px;font-size:22.6px;color:#111;transform:scaleX(0.9519);transform-origin:0 0;left:1018.03px;">Apr-26</div>
<div class="t" style="top:768.79px;font-size:22.6px;color:#111;transform:scaleX(0.9519);transform-origin:0 0;left:1226.89px;">Jul-26</div>
<div class="t" style="top:768.79px;font-size:22.6px;color:#111;transform:scaleX(0.9613);transform-origin:0 0;left:1475.66px;">120,000</div>
<div class="t" style="top:768.79px;font-size:22.6px;color:#111;transform:scaleX(0.9519);transform-origin:0 0;left:1652.27px;">Yes</div>
<div class="t" style="top:796.79px;font-size:22.6px;color:#111;transform:scaleX(0.9538);transform-origin:0 0;left:141.6px;">HVAC &amp; Ventilation System</div>
<div class="t" style="top:796.79px;font-size:22.6px;color:#111;transform:scaleX(0.9519);transform-origin:0 0;left:1016.2px;">Feb-26</div>
<div class="t" style="top:796.79px;font-size:22.6px;color:#111;transform:scaleX(0.9519);transform-origin:0 0;left:1220.33px;">May-26</div>
<div class="t" style="top:796.79px;font-size:22.6px;color:#111;transform:scaleX(0.9613);transform-origin:0 0;left:1475.66px;">100,000</div>
<div class="t" style="top:796.79px;font-size:22.6px;color:#111;transform:scaleX(0.9519);transform-origin:0 0;left:1652.27px;">Yes</div>
<div class="t" style="top:824.79px;font-size:22.6px;color:#111;transform:scaleX(0.9551);transform-origin:0 0;left:141.6px;">Security &amp; Surveillance</div>
<div class="t" style="top:824.79px;font-size:22.6px;color:#111;transform:scaleX(0.9519);transform-origin:0 0;left:1014.43px;">May-26</div>
<div class="t" style="top:824.79px;font-size:22.6px;color:#111;transform:scaleX(0.9519);transform-origin:0 0;left:1221.51px;">Aug-26</div>
<div class="t" style="top:824.79px;font-size:22.6px;color:#111;transform:scaleX(0.9613);transform-origin:0 0;left:1487.72px;">40,000</div>
<div class="t" style="top:824.79px;font-size:22.6px;color:#111;transform:scaleX(0.9519);transform-origin:0 0;left:1652.27px;">Yes</div>
<div class="t" style="top:852.79px;font-size:22.6px;color:#111;transform:scaleX(0.9709);transform-origin:0 0;left:141.6px;">Inventory Storage Units</div>
<div class="t" style="top:852.79px;font-size:22.6px;color:#111;transform:scaleX(0.9519);transform-origin:0 0;left:1016.2px;">Mar-26</div>
<div class="t" style="top:852.79px;font-size:22.6px;color:#111;transform:scaleX(0.9519);transform-origin:0 0;left:1223.29px;">Jun-26</div>
<div class="t" style="top:852.79px;font-size:22.6px;color:#111;transform:scaleX(0.9613);transform-origin:0 0;left:1487.72px;">50,000</div>
<div class="t" style="top:852.79px;font-size:22.6px;color:#111;transform:scaleX(0.9519);transform-origin:0 0;left:1652.27px;">Yes</div>
<div class="t" style="top:880.79px;font-size:22.6px;color:#111;transform:scaleX(0.9595);transform-origin:0 0;left:141.6px;">Office Equipment</div>
<div class="t" style="top:880.79px;font-size:22.6px;color:#111;transform:scaleX(0.9519);transform-origin:0 0;left:1017.39px;">Jun-26</div>
<div class="t" style="top:880.79px;font-size:22.6px;color:#111;transform:scaleX(0.9519);transform-origin:0 0;left:1221.51px;">Sep-26</div>
<div class="t" style="top:880.79px;font-size:22.6px;color:#111;transform:scaleX(0.9613);transform-origin:0 0;left:1487.72px;">15,000</div>
<div class="t" style="top:880.79px;font-size:22.6px;color:#111;transform:scaleX(0.9519);transform-origin:0 0;left:1652.27px;">Yes</div>
<div class="t" style="top:909.29px;font-size:22.6px;color:#111;left:142.5px;">-</div>
<div class="t" style="top:908.79px;font-size:22.6px;color:#111;transform:scaleX(0.9519);transform-origin:0 0;left:1652.27px;">Yes</div>
<div class="t" style="top:937.29px;font-size:22.6px;color:#111;left:142.5px;">-</div>
<div class="t" style="top:936.79px;font-size:22.6px;color:#111;transform:scaleX(0.9519);transform-origin:0 0;left:1652.27px;">Yes</div>
<div class="t" style="top:965.29px;font-size:22.6px;color:#111;left:142.5px;">-</div>
<div class="t" style="top:964.79px;font-size:22.6px;color:#111;transform:scaleX(0.9519);transform-origin:0 0;left:1652.27px;">Yes</div>
<div class="t" style="top:993.29px;font-size:22.6px;color:#111;left:142.5px;">-</div>
<div class="t" style="top:992.79px;font-size:22.6px;color:#111;transform:scaleX(0.9519);transform-origin:0 0;left:1652.27px;">Yes</div>
<div class="t" style="top:1021.29px;font-size:22.6px;color:#111;left:142.5px;">-</div>
<div class="t" style="top:1020.79px;font-size:22.6px;color:#111;transform:scaleX(0.9519);transform-origin:0 0;left:1652.27px;">Yes</div>
<div class="t" style="top:1049.29px;font-size:22.6px;color:#111;left:142.5px;">-</div>
<div class="t" style="top:1048.79px;font-size:22.6px;color:#111;transform:scaleX(0.9519);transform-origin:0 0;left:1652.27px;">Yes</div>
<div class="t" style="top:1077.29px;font-size:22.6px;color:#111;left:142.5px;">-</div>
<div class="t" style="top:1076.79px;font-size:22.6px;color:#111;transform:scaleX(0.9519);transform-origin:0 0;left:1652.27px;">Yes</div>
<div class="t" style="top:1105.29px;font-size:22.6px;color:#111;left:142.5px;">-</div>
<div class="t" style="top:1104.79px;font-size:22.6px;color:#111;transform:scaleX(0.9519);transform-origin:0 0;left:1652.27px;">Yes</div>
<div class="t" style="top:1133.29px;font-size:22.6px;color:#111;left:142.5px;">-</div>
<div class="t" style="top:1132.79px;font-size:22.6px;color:#111;transform:scaleX(0.9519);transform-origin:0 0;left:1652.27px;">Yes</div>
<div class="t" style="top:1161.29px;font-size:22.6px;color:#111;left:142.5px;">-</div>
<div class="t" style="top:1160.79px;font-size:22.6px;color:#111;transform:scaleX(0.9519);transform-origin:0 0;left:1652.27px;">Yes</div>
<div class="t" style="top:1189.29px;font-size:22.6px;color:#111;left:142.5px;">-</div>
<div class="t" style="top:1188.79px;font-size:22.6px;color:#111;transform:scaleX(0.9519);transform-origin:0 0;left:1652.27px;">Yes</div>
<div class="t" style="top:655.99px;font-size:22.6px;color:#111;transform:scaleX(0.9613);transform-origin:0 0;left:1851.66px;">250,000</div>
<div class="t" style="top:655.99px;font-size:22.6px;color:#111;transform:scaleX(0.9613);transform-origin:0 0;left:2020.86px;">250,000</div>
<div class="t" style="top:655.99px;font-size:22.6px;color:#111;transform:scaleX(0.9613);transform-origin:0 0;left:2189.86px;">250,000</div>
<div class="t" style="top:656.99px;font-size:22.6px;color:#111;left:2405.83px;">-</div>
<div class="t" style="top:656.99px;font-size:22.6px;color:#111;left:2574.93px;">-</div>
<div class="t" style="top:656.99px;font-size:22.6px;color:#111;left:2743.73px;">-</div>
<div class="t" style="top:685.79px;font-size:22.6px;color:#111;left:1898.63px;">-</div>
<div class="t" style="top:684.79px;font-size:22.6px;color:#111;transform:scaleX(0.9613);transform-origin:0 0;left:2020.86px;">100,000</div>
<div class="t" style="top:684.79px;font-size:22.6px;color:#111;transform:scaleX(0.9613);transform-origin:0 0;left:2189.86px;">100,000</div>
<div class="t" style="top:684.79px;font-size:22.6px;color:#111;transform:scaleX(0.9613);transform-origin:0 0;left:2358.86px;">100,000</div>
<div class="t" style="top:685.79px;font-size:22.6px;color:#111;left:2574.93px;">-</div>
<div class="t" style="top:685.79px;font-size:22.6px;color:#111;left:2743.73px;">-</div>
<div class="t" style="top:713.79px;font-size:22.6px;color:#111;left:1898.63px;">-</div>
<div class="t" style="top:713.79px;font-size:22.6px;color:#111;left:2067.83px;">-</div>
<div class="t" style="top:712.79px;font-size:22.6px;color:#111;transform:scaleX(0.9613);transform-origin:0 0;left:2201.92px;">26,667</div>
<div class="t" style="top:712.79px;font-size:22.6px;color:#111;transform:scaleX(0.9613);transform-origin:0 0;left:2370.92px;">26,667</div>
<div class="t" style="top:712.79px;font-size:22.6px;color:#111;transform:scaleX(0.9613);transform-origin:0 0;left:2540.02px;">26,667</div>
<div class="t" style="top:713.79px;font-size:22.6px;color:#111;left:2743.73px;">-</div>
<div class="t" style="top:740.79px;font-size:22.6px;color:#111;transform:scaleX(0.9613);transform-origin:0 0;left:1863.72px;">41,667</div>
<div class="t" style="top:740.79px;font-size:22.6px;color:#111;transform:scaleX(0.9613);transform-origin:0 0;left:2032.92px;">41,667</div>
<div class="t" style="top:740.79px;font-size:22.6px;color:#111;transform:scaleX(0.9613);transform-origin:0 0;left:2201.92px;">41,667</div>
<div class="t" style="top:740.79px;font-size:22.6px;color:#111;transform:scaleX(0.9613);transform-origin:0 0;left:2370.92px;">41,667</div>
<div class="t" style="top:740.79px;font-size:22.6px;color:#111;transform:scaleX(0.9613);transform-origin:0 0;left:2540.02px;">41,667</div>
<div class="t" style="top:740.79px;font-size:22.6px;color:#111;transform:scaleX(0.9613);transform-origin:0 0;left:2708.82px;">41,667</div>
<div class="t" style="top:769.79px;font-size:22.6px;color:#111;left:1898.63px;">-</div>
<div class="t" style="top:769.79px;font-size:22.6px;color:#111;left:2067.83px;">-</div>
<div class="t" style="top:769.79px;font-size:22.6px;color:#111;left:2236.83px;">-</div>
<div class="t" style="top:768.79px;font-size:22.6px;color:#111;transform:scaleX(0.9613);transform-origin:0 0;left:2370.92px;">30,000</div>
<div class="t" style="top:768.79px;font-size:22.6px;color:#111;transform:scaleX(0.9613);transform-origin:0 0;left:2540.02px;">30,000</div>
<div class="t" style="top:768.79px;font-size:22.6px;color:#111;transform:scaleX(0.9613);transform-origin:0 0;left:2708.82px;">30,000</div>
<div class="t" style="top:797.79px;font-size:22.6px;color:#111;left:1898.63px;">-</div>
<div class="t" style="top:796.79px;font-size:22.6px;color:#111;transform:scaleX(0.9613);transform-origin:0 0;left:2032.92px;">25,000</div>
<div class="t" style="top:796.79px;font-size:22.6px;color:#111;transform:scaleX(0.9613);transform-origin:0 0;left:2201.92px;">25,000</div>
<div class="t" style="top:796.79px;font-size:22.6px;color:#111;transform:scaleX(0.9613);transform-origin:0 0;left:2370.92px;">25,000</div>
<div class="t" style="top:796.79px;font-size:22.6px;color:#111;transform:scaleX(0.9613);transform-origin:0 0;left:2540.02px;">25,000</div>
<div class="t" style="top:797.79px;font-size:22.6px;color:#111;left:2743.73px;">-</div>
<div class="t" style="top:825.79px;font-size:22.6px;color:#111;left:1898.63px;">-</div>
<div class="t" style="top:825.79px;font-size:22.6px;color:#111;left:2067.83px;">-</div>
<div class="t" style="top:825.79px;font-size:22.6px;color:#111;left:2236.83px;">-</div>
<div class="t" style="top:825.79px;font-size:22.6px;color:#111;left:2405.83px;">-</div>
<div class="t" style="top:824.79px;font-size:22.6px;color:#111;transform:scaleX(0.9613);transform-origin:0 0;left:2540.02px;">10,000</div>
<div class="t" style="top:824.79px;font-size:22.6px;color:#111;transform:scaleX(0.9613);transform-origin:0 0;left:2708.82px;">10,000</div>
<div class="t" style="top:853.79px;font-size:22.6px;color:#111;left:1898.63px;">-</div>
<div class="t" style="top:853.79px;font-size:22.6px;color:#111;left:2067.83px;">-</div>
<div class="t" style="top:852.79px;font-size:22.6px;color:#111;transform:scaleX(0.9613);transform-origin:0 0;left:2201.92px;">12,500</div>
<div class="t" style="top:852.79px;font-size:22.6px;color:#111;transform:scaleX(0.9613);transform-origin:0 0;left:2370.92px;">12,500</div>
<div class="t" style="top:852.79px;font-size:22.6px;color:#111;transform:scaleX(0.9613);transform-origin:0 0;left:2540.02px;">12,500</div>
<div class="t" style="top:852.79px;font-size:22.6px;color:#111;transform:scaleX(0.9613);transform-origin:0 0;left:2708.82px;">12,500</div>
<div class="t" style="top:881.79px;font-size:22.6px;color:#111;left:1898.63px;">-</div>
<div class="t" style="top:881.79px;font-size:22.6px;color:#111;left:2067.83px;">-</div>
<div class="t" style="top:881.79px;font-size:22.6px;color:#111;left:2236.83px;">-</div>
<div class="t" style="top:881.79px;font-size:22.6px;color:#111;left:2405.83px;">-</div>
<div class="t" style="top:881.79px;font-size:22.6px;color:#111;left:2574.93px;">-</div>
<div class="t" style="top:880.79px;font-size:22.6px;color:#111;transform:scaleX(0.9613);transform-origin:0 0;left:2720.88px;">3,750</div>
<div class="t" style="top:909.79px;font-size:22.6px;color:#111;left:1898.63px;">-</div>
<div class="t" style="top:909.79px;font-size:22.6px;color:#111;left:2067.83px;">-</div>
<div class="t" style="top:909.79px;font-size:22.6px;color:#111;left:2236.83px;">-</div>
<div class="t" style="top:909.79px;font-size:22.6px;color:#111;left:2405.83px;">-</div>
<div class="t" style="top:909.79px;font-size:22.6px;color:#111;left:2574.93px;">-</div>
<div class="t" style="top:909.79px;font-size:22.6px;color:#111;left:2743.73px;">-</div>
<div class="t" style="top:937.79px;font-size:22.6px;color:#111;left:1898.63px;">-</div>
<div class="t" style="top:937.79px;font-size:22.6px;color:#111;left:2067.83px;">-</div>
<div class="t" style="top:937.79px;font-size:22.6px;color:#111;left:2236.83px;">-</div>
<div class="t" style="top:937.79px;font-size:22.6px;color:#111;left:2405.83px;">-</div>
<div class="t" style="top:937.79px;font-size:22.6px;color:#111;left:2574.93px;">-</div>
<div class="t" style="top:937.79px;font-size:22.6px;color:#111;left:2743.73px;">-</div>
<div class="t" style="top:965.79px;font-size:22.6px;color:#111;left:1898.63px;">-</div>
<div class="t" style="top:965.79px;font-size:22.6px;color:#111;left:2067.83px;">-</div>
<div class="t" style="top:965.79px;font-size:22.6px;color:#111;left:2236.83px;">-</div>
<div class="t" style="top:965.79px;font-size:22.6px;color:#111;left:2405.83px;">-</div>
<div class="t" style="top:965.79px;font-size:22.6px;color:#111;left:2574.93px;">-</div>
<div class="t" style="top:965.79px;font-size:22.6px;color:#111;left:2743.73px;">-</div>
<div class="t" style="top:993.79px;font-size:22.6px;color:#111;left:1898.63px;">-</div>
<div class="t" style="top:993.79px;font-size:22.6px;color:#111;left:2067.83px;">-</div>
<div class="t" style="top:993.79px;font-size:22.6px;color:#111;left:2236.83px;">-</div>
<div class="t" style="top:993.79px;font-size:22.6px;color:#111;left:2405.83px;">-</div>
<div class="t" style="top:993.79px;font-size:22.6px;color:#111;left:2574.93px;">-</div>
<div class="t" style="top:993.79px;font-size:22.6px;color:#111;left:2743.73px;">-</div>
<div class="t" style="top:1021.79px;font-size:22.6px;color:#111;left:1898.63px;">-</div>
<div class="t" style="top:1021.79px;font-size:22.6px;color:#111;left:2067.83px;">-</div>
<div class="t" style="top:1021.79px;font-size:22.6px;color:#111;left:2236.83px;">-</div>
<div class="t" style="top:1021.79px;font-size:22.6px;color:#111;left:2405.83px;">-</div>
<div class="t" style="top:1021.79px;font-size:22.6px;color:#111;left:2574.93px;">-</div>
<div class="t" style="top:1021.79px;font-size:22.6px;color:#111;left:2743.73px;">-</div>
<div class="t" style="top:1049.79px;font-size:22.6px;color:#111;left:1898.63px;">-</div>
<div class="t" style="top:1049.79px;font-size:22.6px;color:#111;left:2067.83px;">-</div>
<div class="t" style="top:1049.79px;font-size:22.6px;color:#111;left:2236.83px;">-</div>
<div class="t" style="top:1049.79px;font-size:22.6px;color:#111;left:2405.83px;">-</div>
<div class="t" style="top:1049.79px;font-size:22.6px;color:#111;left:2574.93px;">-</div>
<div class="t" style="top:1049.79px;font-size:22.6px;color:#111;left:2743.73px;">-</div>
<div class="t" style="top:1077.79px;font-size:22.6px;color:#111;left:1898.63px;">-</div>
<div class="t" style="top:1077.79px;font-size:22.6px;color:#111;left:2067.83px;">-</div>
<div class="t" style="top:1077.79px;font-size:22.6px;color:#111;left:2236.83px;">-</div>
<div class="t" style="top:1077.79px;font-size:22.6px;color:#111;left:2405.83px;">-</div>
<div class="t" style="top:1077.79px;font-size:22.6px;color:#111;left:2574.93px;">-</div>
<div class="t" style="top:1077.79px;font-size:22.6px;color:#111;left:2743.73px;">-</div>
<div class="t" style="top:1105.79px;font-size:22.6px;color:#111;left:1898.63px;">-</div>
<div class="t" style="top:1105.79px;font-size:22.6px;color:#111;left:2067.83px;">-</div>
<div class="t" style="top:1105.79px;font-size:22.6px;color:#111;left:2236.83px;">-</div>
<div class="t" style="top:1105.79px;font-size:22.6px;color:#111;left:2405.83px;">-</div>
<div class="t" style="top:1105.79px;font-size:22.6px;color:#111;left:2574.93px;">-</div>
<div class="t" style="top:1105.79px;font-size:22.6px;color:#111;left:2743.73px;">-</div>
<div class="t" style="top:1133.79px;font-size:22.6px;color:#111;left:1898.63px;">-</div>
<div class="t" style="top:1133.79px;font-size:22.6px;color:#111;left:2067.83px;">-</div>
<div class="t" style="top:1133.79px;font-size:22.6px;color:#111;left:2236.83px;">-</div>
<div class="t" style="top:1133.79px;font-size:22.6px;color:#111;left:2405.83px;">-</div>
<div class="t" style="top:1133.79px;font-size:22.6px;color:#111;left:2574.93px;">-</div>
<div class="t" style="top:1133.79px;font-size:22.6px;color:#111;left:2743.73px;">-</div>
<div class="t" style="top:1161.79px;font-size:22.6px;color:#111;left:1898.63px;">-</div>
<div class="t" style="top:1161.79px;font-size:22.6px;color:#111;left:2067.83px;">-</div>
<div class="t" style="top:1161.79px;font-size:22.6px;color:#111;left:2236.83px;">-</div>
<div class="t" style="top:1161.79px;font-size:22.6px;color:#111;left:2405.83px;">-</div>
<div class="t" style="top:1161.79px;font-size:22.6px;color:#111;left:2574.93px;">-</div>
<div class="t" style="top:1161.79px;font-size:22.6px;color:#111;left:2743.73px;">-</div>
<div class="t" style="top:1189.79px;font-size:22.6px;color:#111;left:1898.63px;">-</div>
<div class="t" style="top:1189.79px;font-size:22.6px;color:#111;left:2067.83px;">-</div>
<div class="t" style="top:1189.79px;font-size:22.6px;color:#111;left:2236.83px;">-</div>
<div class="t" style="top:1189.79px;font-size:22.6px;color:#111;left:2405.83px;">-</div>
<div class="t" style="top:1189.79px;font-size:22.6px;color:#111;left:2574.93px;">-</div>
<div class="t" style="top:1189.79px;font-size:22.6px;color:#111;left:2743.73px;">-</div>
<div style="left:137px;top:1212px;width:2723px;height:35.5px;background:#4bb1e6;"></div>
<div class="t" style="top:1215.35px;font-size:29px;color:#fff;font-weight:700;transform:scaleX(1.0278);transform-origin:0 0;left:143.5px;-webkit-text-stroke:0.5px #fff;">Total</div>
<div class="t" style="top:1219.59px;font-size:22.6px;color:#fff;font-weight:700;transform:scaleX(1.0870);transform-origin:0 0;left:1442.08px;-webkit-text-stroke:0.4px #fff;">1,705,000</div>
<div class="t" style="top:1219.59px;font-size:22.6px;color:#fff;font-weight:700;transform:scaleX(1.0870);transform-origin:0 0;left:1838.39px;-webkit-text-stroke:0.4px #fff;">291,667</div>
<div class="t" style="top:1219.59px;font-size:22.6px;color:#fff;font-weight:700;transform:scaleX(1.0870);transform-origin:0 0;left:2007.59px;-webkit-text-stroke:0.4px #fff;">416,667</div>
<div class="t" style="top:1219.59px;font-size:22.6px;color:#fff;font-weight:700;transform:scaleX(1.0870);transform-origin:0 0;left:2176.59px;-webkit-text-stroke:0.4px #fff;">455,833</div>
<div class="t" style="top:1219.59px;font-size:22.6px;color:#fff;font-weight:700;transform:scaleX(1.0870);transform-origin:0 0;left:2345.59px;-webkit-text-stroke:0.4px #fff;">235,833</div>
<div class="t" style="top:1219.59px;font-size:22.6px;color:#fff;font-weight:700;transform:scaleX(1.0870);transform-origin:0 0;left:2514.69px;-webkit-text-stroke:0.4px #fff;">145,833</div>
<div class="t" style="top:1219.59px;font-size:22.6px;color:#fff;font-weight:700;transform:scaleX(1.0870);transform-origin:0 0;left:2697.13px;-webkit-text-stroke:0.4px #fff;">97,917</div>
<div class="t" style="top:1306.72px;font-size:39.5px;color:#222;font-weight:700;transform:scaleX(1.0340);transform-origin:0 0;left:96.6px;-webkit-text-stroke:0.7px #222;">Startup Costs Depreciation, $</div>
<div style="left:137px;top:1373.4px;width:2723px;height:28.2px;background:#4bb1e6;"></div>
<div class="t" style="top:1377.56px;font-size:21.7px;color:#fff;font-weight:700;transform:scaleX(1.0570);transform-origin:0 0;left:142.7px;-webkit-text-stroke:0.4px #fff;">Opening Net Book Value</div>
<div class="t" style="top:1375.8px;font-size:22px;color:#fff;font-weight:700;left:1893.13px;">-</div>
<div class="t" style="top:1377.79px;font-size:22.6px;color:#fff;font-weight:700;transform:scaleX(1.0870);transform-origin:0 0;left:2007.59px;-webkit-text-stroke:0.4px #fff;">289,236</div>
<div class="t" style="top:1377.79px;font-size:22.6px;color:#fff;font-weight:700;transform:scaleX(1.0870);transform-origin:0 0;left:2176.59px;-webkit-text-stroke:0.4px #fff;">700,000</div>
<div class="t" style="top:1377.79px;font-size:22.6px;color:#fff;font-weight:700;transform:scaleX(1.0870);transform-origin:0 0;left:2325.08px;-webkit-text-stroke:0.4px #fff;">1,146,132</div>
<div class="t" style="top:1377.79px;font-size:22.6px;color:#fff;font-weight:700;transform:scaleX(1.0870);transform-origin:0 0;left:2494.18px;-webkit-text-stroke:0.4px #fff;">1,370,299</div>
<div class="t" style="top:1377.79px;font-size:22.6px;color:#fff;font-weight:700;transform:scaleX(1.0870);transform-origin:0 0;left:2662.98px;-webkit-text-stroke:0.4px #fff;">1,503,250</div>
<div class="t" style="top:1377.79px;font-size:22.6px;color:#fff;font-weight:700;transform:scaleX(1.0870);transform-origin:0 0;left:2831.98px;-webkit-text-stroke:0.4px #fff;">1,587,469</div>
<div class="t" style="top:1404.69px;font-size:22.6px;color:#111;transform:scaleX(0.9649);transform-origin:0 0;left:162.7px;">Expenditure - Amortizable</div>
<div class="t" style="top:1405.69px;font-size:22.6px;color:#111;left:1729.63px;">-</div>
<div class="t" style="top:1404.69px;font-size:22.6px;color:#111;transform:scaleX(0.9613);transform-origin:0 0;left:1851.66px;">291,667</div>
<div class="t" style="top:1404.69px;font-size:22.6px;color:#111;transform:scaleX(0.9613);transform-origin:0 0;left:2020.86px;">416,667</div>
<div class="t" style="top:1404.69px;font-size:22.6px;color:#111;transform:scaleX(0.9613);transform-origin:0 0;left:2189.86px;">455,833</div>
<div class="t" style="top:1404.69px;font-size:22.6px;color:#111;transform:scaleX(0.9613);transform-origin:0 0;left:2358.86px;">235,833</div>
<div class="t" style="top:1404.69px;font-size:22.6px;color:#111;transform:scaleX(0.9613);transform-origin:0 0;left:2527.96px;">145,833</div>
<div class="t" style="top:1404.69px;font-size:22.6px;color:#111;transform:scaleX(0.9613);transform-origin:0 0;left:2708.82px;">97,917</div>
<div class="t" style="top:1432.69px;font-size:22.6px;color:#111;transform:scaleX(0.9719);transform-origin:0 0;left:162.7px;">Depreciation (Depreciation Period (Years) - 10)</div>
<div class="t" style="top:1432.69px;font-size:22.6px;color:#111;transform:scaleX(0.9613);transform-origin:0 0;left:1875.78px;">2,431</div>
<div class="t" style="top:1432.69px;font-size:22.6px;color:#111;transform:scaleX(0.9613);transform-origin:0 0;left:2044.98px;">5,903</div>
<div class="t" style="top:1432.69px;font-size:22.6px;color:#111;transform:scaleX(0.9613);transform-origin:0 0;left:2213.98px;">9,701</div>
<div class="t" style="top:1432.69px;font-size:22.6px;color:#111;transform:scaleX(0.9613);transform-origin:0 0;left:2372.55px;">11,667</div>
<div class="t" style="top:1432.69px;font-size:22.6px;color:#111;transform:scaleX(0.9613);transform-origin:0 0;left:2540.02px;">12,882</div>
<div class="t" style="top:1432.69px;font-size:22.6px;color:#111;transform:scaleX(0.9613);transform-origin:0 0;left:2708.82px;">13,698</div>
<div style="left:137px;top:1457.5px;width:2723px;height:27.7px;background:#4bb1e6;"></div>
<div class="t" style="top:1461.16px;font-size:21.7px;color:#fff;font-weight:700;transform:scaleX(1.0570);transform-origin:0 0;left:142.7px;-webkit-text-stroke:0.4px #fff;">Closing Net Book Value</div>
<div class="t" style="top:1459.4px;font-size:22px;color:#fff;font-weight:700;left:1724.13px;">-</div>
<div class="t" style="top:1461.39px;font-size:22.6px;color:#fff;font-weight:700;transform:scaleX(1.0870);transform-origin:0 0;left:1838.39px;-webkit-text-stroke:0.4px #fff;">289,236</div>
<div class="t" style="top:1461.39px;font-size:22.6px;color:#fff;font-weight:700;transform:scaleX(1.0870);transform-origin:0 0;left:2007.59px;-webkit-text-stroke:0.4px #fff;">700,000</div>
<div class="t" style="top:1461.39px;font-size:22.6px;color:#fff;font-weight:700;transform:scaleX(1.0870);transform-origin:0 0;left:2156.08px;-webkit-text-stroke:0.4px #fff;">1,146,132</div>
<div class="t" style="top:1461.39px;font-size:22.6px;color:#fff;font-weight:700;transform:scaleX(1.0870);transform-origin:0 0;left:2325.08px;-webkit-text-stroke:0.4px #fff;">1,370,299</div>
<div class="t" style="top:1461.39px;font-size:22.6px;color:#fff;font-weight:700;transform:scaleX(1.0870);transform-origin:0 0;left:2494.18px;-webkit-text-stroke:0.4px #fff;">1,503,250</div>
<div class="t" style="top:1461.39px;font-size:22.6px;color:#fff;font-weight:700;transform:scaleX(1.0870);transform-origin:0 0;left:2662.98px;-webkit-text-stroke:0.4px #fff;">1,587,469</div>
<div class="t" style="top:1461.39px;font-size:22.6px;color:#fff;font-weight:700;transform:scaleX(1.0870);transform-origin:0 0;left:2831.98px;-webkit-text-stroke:0.4px #fff;">1,687,469</div>
<div style="left:137px;top:1527.2px;width:2723px;height:28.3px;background:#4bb1e6;"></div>
<div class="t" style="top:1531.46px;font-size:21.7px;color:#fff;font-weight:700;transform:scaleX(1.0570);transform-origin:0 0;left:142.7px;-webkit-text-stroke:0.4px #fff;">Opening Net Book Value</div>
<div class="t" style="top:1529.7px;font-size:22px;color:#fff;font-weight:700;left:1893.13px;">-</div>
<div class="t" style="top:1529.7px;font-size:22px;color:#fff;font-weight:700;left:2062.33px;">-</div>
<div class="t" style="top:1529.7px;font-size:22px;color:#fff;font-weight:700;left:2231.33px;">-</div>
<div class="t" style="top:1529.7px;font-size:22px;color:#fff;font-weight:700;left:2400.33px;">-</div>
<div class="t" style="top:1529.7px;font-size:22px;color:#fff;font-weight:700;left:2569.43px;">-</div>
<div class="t" style="top:1529.7px;font-size:22px;color:#fff;font-weight:700;left:2738.23px;">-</div>
<div class="t" style="top:1558.59px;font-size:22.6px;color:#111;transform:scaleX(0.9626);transform-origin:0 0;left:162.7px;">Expenditure - Non-Amortizable</div>
<div class="t" style="top:1559.59px;font-size:22.6px;color:#111;left:1898.63px;">-</div>
<div class="t" style="top:1559.59px;font-size:22.6px;color:#111;left:2067.83px;">-</div>
<div class="t" style="top:1559.59px;font-size:22.6px;color:#111;left:2236.83px;">-</div>
<div class="t" style="top:1559.59px;font-size:22.6px;color:#111;left:2405.83px;">-</div>
<div class="t" style="top:1559.59px;font-size:22.6px;color:#111;left:2574.93px;">-</div>
<div class="t" style="top:1559.59px;font-size:22.6px;color:#111;left:2743.73px;">-</div>
<div style="left:137px;top:1583.4px;width:2723px;height:28px;background:#4bb1e6;"></div>
<div class="t" style="top:1587.36px;font-size:21.7px;color:#fff;font-weight:700;transform:scaleX(1.0570);transform-origin:0 0;left:142.7px;-webkit-text-stroke:0.4px #fff;">Closing Net Book Value</div>
<div class="t" style="top:1585.6px;font-size:22px;color:#fff;font-weight:700;left:1893.13px;">-</div>
<div class="t" style="top:1585.6px;font-size:22px;color:#fff;font-weight:700;left:2062.33px;">-</div>
<div class="t" style="top:1585.6px;font-size:22px;color:#fff;font-weight:700;left:2231.33px;">-</div>
<div class="t" style="top:1585.6px;font-size:22px;color:#fff;font-weight:700;left:2400.33px;">-</div>
<div class="t" style="top:1585.6px;font-size:22px;color:#fff;font-weight:700;left:2569.43px;">-</div>
<div class="t" style="top:1585.6px;font-size:22px;color:#fff;font-weight:700;left:2738.23px;">-</div>
<div style="left:1773px;top:305px;width:1px;height:1365px;background:rgba(150,150,150,0.55);"></div>
<div style="left:2860px;top:278px;width:31px;height:1392px;background:#0a0a0a;"></div>
<div style="left:2863.5px;top:278.5px;width:25px;height:1392.5px;background:#141414;border-radius:12.5px;"></div>
<svg style="left:2868px;top:285px;" width="16" height="12" viewBox="0 0 16 12"><path d="M8 1.5 L14.5 10.5 H1.5 Z" fill="#9b9b9b" stroke="#9b9b9b" stroke-width="1.5" stroke-linejoin="round"/></svg>
<div style="left:2870px;top:304px;width:12px;height:1310px;background:#9b9b9b;border-radius:6px;"></div>
<svg style="left:2868px;top:1653px;" width="16" height="12" viewBox="0 0 16 12"><path d="M8 10.5 L14.5 1.5 H1.5 Z" fill="#9b9b9b" stroke="#9b9b9b" stroke-width="1.5" stroke-linejoin="round"/></svg>
<div style="left:11px;top:1670px;width:2880px;height:48px;background:#0a0a0a;"></div>
<div style="left:11px;top:1718px;width:2880px;height:1px;background:#262626;"></div>
<div style="left:11px;top:1719px;width:2880px;height:32px;background:#141414;"></div>
<svg style="left:44px;top:1684px;" width="14" height="18" viewBox="0 0 14 18"><path d="M11 1.5 L3 9 L11 16.5" stroke="#8a8a8a" stroke-width="1.7" fill="none"/></svg>
<svg style="left:92px;top:1684px;" width="14" height="18" viewBox="0 0 14 18"><path d="M3 1.5 L11 9 L3 16.5" stroke="#dcdcdc" stroke-width="1.7" fill="none"/></svg>
<div class="t" style="top:1684.9px;font-size:22px;color:#fff;transform:scaleX(0.9284);transform-origin:0 0;left:190.5px;">Contents</div>
<div style="left:299px;top:1676.2px;width:127.8px;height:35.5px;background:#fde96b;border-radius:7px;"></div>
<div class="t" style="top:1684.3px;font-size:22px;color:#1a1a1a;transform:scaleX(0.9202);transform-origin:0 0;left:313.4px;">Dashboard</div>
<div style="left:440px;top:1676.2px;width:105.5px;height:35.5px;background:#fde96b;border-radius:7px;"></div>
<div class="t" style="top:1684.3px;font-size:22px;color:#1a1a1a;transform:scaleX(0.8773);transform-origin:0 0;left:454.1px;">Revenue</div>
<div style="left:559px;top:1676.2px;width:157.5px;height:35.5px;background:#fde96b;border-radius:7px;"></div>
<div class="t" style="top:1684.3px;font-size:22px;color:#1a1a1a;transform:scaleX(0.8672);transform-origin:0 0;left:571.5px;">COGS &amp; OPEX</div>
<div style="left:730px;top:1676.2px;width:89px;height:35.5px;background:#fde96b;border-radius:7px;"></div>
<div class="t" style="top:1684.3px;font-size:22px;color:#1a1a1a;transform:scaleX(0.9150);transform-origin:0 0;left:743.75px;">Payroll</div>
<div style="left:932.3px;top:1676.2px;width:112.6px;height:35.5px;background:#fde96b;border-radius:7px;"></div>
<div class="t" style="top:1684.3px;font-size:22px;color:#1a1a1a;transform:scaleX(0.9145);transform-origin:0 0;left:946.1px;">CapTable</div>
<div style="left:1057.9px;top:1676.2px;width:89.9px;height:35.5px;background:#fde96b;border-radius:7px;"></div>
<div class="t" style="top:1684.3px;font-size:22px;color:#1a1a1a;transform:scaleX(0.9120);transform-origin:0 0;left:1071.6px;">Capital</div>
<div style="left:1161px;top:1676.2px;width:41.7px;height:35.5px;background:#4bb1e6;border-radius:7px;"></div>
<div class="t" style="top:1684.3px;font-size:22px;color:#1a1a1a;transform:scaleX(0.7504);transform-origin:0 0;left:1174.05px;">IS</div>
<div style="left:1216px;top:1676.2px;width:47.8px;height:35.5px;background:#4bb1e6;border-radius:7px;"></div>
<div class="t" style="top:1684.3px;font-size:22px;color:#1a1a1a;transform:scaleX(0.7593);transform-origin:0 0;left:1228.75px;">CF</div>
<div style="left:1277px;top:1676.2px;width:47.5px;height:35.5px;background:#4bb1e6;border-radius:7px;"></div>
<div class="t" style="top:1684.3px;font-size:22px;color:#1a1a1a;transform:scaleX(0.7150);transform-origin:0 0;left:1290.25px;">BS</div>
<div style="left:1338px;top:1676.2px;width:114.7px;height:35.5px;background:#4bb1e6;border-radius:7px;"></div>
<div class="t" style="top:1684.3px;font-size:22px;color:#1a1a1a;transform:scaleX(0.8897);transform-origin:0 0;left:1351.85px;">Scenarios</div>
<div style="left:1466px;top:1676.2px;width:114.8px;height:35.5px;background:#4bb1e6;border-radius:7px;"></div>
<div class="t" style="top:1684.3px;font-size:22px;color:#1a1a1a;transform:scaleX(0.9657);transform-origin:0 0;left:1479.9px;">Valuation</div>
<div style="left:1594px;top:1676.2px;width:114px;height:35.5px;background:#4bb1e6;border-radius:7px;"></div>
<div class="t" style="top:1684.3px;font-size:22px;color:#1a1a1a;transform:scaleX(0.9240);transform-origin:0 0;left:1607.5px;">Summary</div>
<div style="left:1721px;top:1676.2px;width:47.75px;height:35.5px;background:#4bb1e6;border-radius:7px;"></div>
<div class="t" style="top:1684.3px;font-size:22px;color:#1a1a1a;transform:scaleX(0.7286);transform-origin:0 0;left:1734.17px;">BE</div>
<div style="left:1782px;top:1676.2px;width:71.6px;height:35.5px;background:#4bb1e6;border-radius:7px;"></div>
<div class="t" style="top:1684.3px;font-size:22px;color:#1a1a1a;transform:scaleX(0.8273);transform-origin:0 0;left:1795.05px;">ROIC</div>
<div style="left:1867px;top:1676.2px;width:84.8px;height:35.5px;background:#4bb1e6;border-radius:7px;"></div>
<div class="t" style="top:1684.3px;font-size:22px;color:#1a1a1a;transform:scaleX(0.8890);transform-origin:0 0;left:1880.6px;">Charts</div>
<div style="left:1965px;top:1676.2px;width:63.6px;height:35.5px;background:#4bb1e6;border-radius:7px;"></div>
<div class="t" style="top:1684.3px;font-size:22px;color:#1a1a1a;transform:scaleX(0.8186);transform-origin:0 0;left:1977.8px;">KPIs</div>
<div style="left:2042px;top:1676.2px;width:29px;height:35.5px;overflow:hidden;"><div style="left:0;top:0;width:60px;height:35.5px;background:#4bb1e6;border-radius:7px;"></div><div class="t" style="left:9px;top:8.97px;font-size:20.5px;color:#1a1a1a;">Sc</div></div>
<div style="left:292.5px;top:1681px;width:1.2px;height:27px;background:#4a4a4a;"></div>
<div style="left:433.6px;top:1681px;width:1.2px;height:27px;background:#4a4a4a;"></div>
<div style="left:552px;top:1681px;width:1.2px;height:27px;background:#4a4a4a;"></div>
<div style="left:723px;top:1681px;width:1.2px;height:27px;background:#4a4a4a;"></div>
<div style="left:825.4px;top:1681px;width:1.2px;height:27px;background:#4a4a4a;"></div>
<div style="left:925.7px;top:1681px;width:1.2px;height:27px;background:#4a4a4a;"></div>
<div style="left:1051.7px;top:1681px;width:1.2px;height:27px;background:#4a4a4a;"></div>
<div style="left:1154.4px;top:1681px;width:1.2px;height:27px;background:#4a4a4a;"></div>
<div style="left:1209px;top:1681px;width:1.2px;height:27px;background:#4a4a4a;"></div>
<div style="left:1270.5px;top:1681px;width:1.2px;height:27px;background:#4a4a4a;"></div>
<div style="left:1331px;top:1681px;width:1.2px;height:27px;background:#4a4a4a;"></div>
<div style="left:1459px;top:1681px;width:1.2px;height:27px;background:#4a4a4a;"></div>
<div style="left:1587.5px;top:1681px;width:1.2px;height:27px;background:#4a4a4a;"></div>
<div style="left:1714.7px;top:1681px;width:1.2px;height:27px;background:#4a4a4a;"></div>
<div style="left:1775.4px;top:1681px;width:1.2px;height:27px;background:#4a4a4a;"></div>
<div style="left:1860px;top:1681px;width:1.2px;height:27px;background:#4a4a4a;"></div>
<div style="left:1958.5px;top:1681px;width:1.2px;height:27px;background:#4a4a4a;"></div>
<div style="left:2035px;top:1681px;width:1.2px;height:27px;background:#4a4a4a;"></div>
<div style="left:820px;top:1670px;width:110px;height:8px;background:#fff;"></div>
<div style="left:819.6px;top:1670px;width:12px;height:10px;background:#0a0a0a;border-top-right-radius:7px;"></div>
<div style="left:919.5px;top:1670px;width:12px;height:10px;background:#0a0a0a;border-top-left-radius:7px;"></div>
<div style="left:831.6px;top:1670px;width:88px;height:41.7px;background:#fdf9e8;border-radius:0 0 7px 7px;"></div>
<div class="t" style="top:1679.72px;font-size:21.5px;color:#222;transform:scaleX(0.8465);transform-origin:0 0;left:844.7px;">CAPEX</div>
<div style="left:844px;top:1704.7px;width:63px;height:3px;background:#1e8a3e;"></div>
<svg style="left:2085px;top:1689px;" width="22" height="8" viewBox="0 0 22 8"><circle cx="3.5" cy="4" r="2.6" fill="#fff"/><circle cx="11" cy="4" r="2.6" fill="#fff"/><circle cx="18.5" cy="4" r="2.6" fill="#fff"/></svg>
<svg style="left:2134px;top:1684px;" width="18" height="18" viewBox="0 0 18 18"><path d="M9 1 V17 M1 9 H17" stroke="#fff" stroke-width="1.7"/></svg>
<svg style="left:2188px;top:1686px;" width="8" height="18" viewBox="0 0 8 18"><circle cx="4" cy="3" r="1.9" fill="#fff"/><circle cx="4" cy="9" r="1.9" fill="#fff"/><circle cx="4" cy="15" r="1.9" fill="#fff"/></svg>
<div style="left:2216px;top:1680px;width:644px;height:26px;background:#161616;border-radius:13px;"></div>
<svg style="left:2222px;top:1686px;" width="14" height="16" viewBox="0 0 14 16"><path d="M12 1.5 V14.5 L2 8 Z" fill="#9b9b9b" stroke="#9b9b9b" stroke-width="1.5" stroke-linejoin="round"/></svg>
<div style="left:2242px;top:1686.5px;width:55px;height:13px;background:#9b9b9b;border-radius:6.5px;"></div>
<svg style="left:2841px;top:1686px;" width="14" height="16" viewBox="0 0 14 16"><path d="M2 1.5 V14.5 L12 8 Z" fill="#9b9b9b" stroke="#9b9b9b" stroke-width="1.5" stroke-linejoin="round"/></svg>
<div class="t" style="top:1726.97px;font-size:16.5px;color:#fff;transform:scaleX(0.8808);transform-origin:0 0;left:27.3px;">Ready</div>
<svg style="left:97px;top:1725px;" width="26" height="22" viewBox="0 0 26 22"><path d="M2 2 H23 M2 6 H23" stroke="#fff" stroke-width="1.6"/><path d="M2 2 V20 H11 M23 2 V9" stroke="#fff" stroke-width="1.6" fill="none"/><path d="M5 10 H10 M5 14 H9" stroke="#fff" stroke-width="1.6"/><circle cx="17.5" cy="15" r="5.5" stroke="#fff" stroke-width="1.7" fill="#141414"/><circle cx="17.5" cy="15" r="2.3" fill="#fff"/></svg>
<svg style="left:145px;top:1723px;" width="25" height="24" viewBox="0 0 25 24"><circle cx="11" cy="3.5" r="2.3" stroke="#fff" stroke-width="1.4" fill="none"/><path d="M2 7 Q11 10 20 7 M11 9 V15 L6 22 M11 15 L13 19" stroke="#fff" stroke-width="1.6" fill="none"/><path d="M14 15 L22 23 M22 15 L14 23" stroke="#fff" stroke-width="1.6"/></svg>
<div class="t" style="top:1726.97px;font-size:16.5px;color:#fff;font-weight:700;transform:scaleX(0.9484);transform-origin:0 0;left:173.2px;">Accessibility: Investigate</div>
<div style="left:2445px;top:1719px;width:60px;height:32px;background:#262626;"></div>
<svg style="left:2463px;top:1724px;" width="22" height="21" viewBox="0 0 22 21"><path d="M1 1 H21 V20 H1 Z M7.7 1 V20 M14.3 1 V20 M1 7.3 H21 M1 13.7 H21" stroke="#fff" stroke-width="1.6" fill="none"/></svg>
<svg style="left:2523px;top:1724px;" width="24" height="21" viewBox="0 0 24 21"><rect x="1" y="1" width="22" height="19" stroke="#fff" stroke-width="1.6" fill="none"/><rect x="5" y="4" width="14" height="13" stroke="#fff" stroke-width="1.4" fill="none"/><path d="M8 7.5 H16 M8 10.5 H16 M8 13.5 H16" stroke="#fff" stroke-width="1.3"/></svg>
<svg style="left:2583px;top:1724px;" width="24" height="21" viewBox="0 0 24 21"><path d="M1 1 H23 V20 H1 Z" stroke="#fff" stroke-width="1.6" fill="none"/><path d="M8 1 V11 H16 V1" stroke="#fff" stroke-width="1.6" fill="none"/></svg>
<div style="left:2632px;top:1733.5px;width:13px;height:1.5px;background:#fff;"></div>
<div style="left:2653px;top:1733.5px;width:148px;height:2px;background:#9a9a9a;"></div>
<div style="left:2726px;top:1728px;width:1.5px;height:12px;background:#9a9a9a;"></div>
<div style="left:2733px;top:1726px;width:8px;height:17.5px;background:#a8a8a8;border-radius:1px;"></div>
<svg style="left:2808px;top:1727px;" width="14" height="14" viewBox="0 0 14 14"><path d="M7 0.5 V13.5 M0.5 7 H13.5" stroke="#fff" stroke-width="1.5"/></svg>
<div class="t" style="top:1727.55px;font-size:17px;color:#fff;transform:scaleX(0.8961);transform-origin:0 0;left:2840px;">140%</div>
<div style="left:0px;top:0px;width:2902px;height:11px;background:#000;"></div>
<div style="left:0px;top:1751px;width:2902px;height:11px;background:#000;"></div>
<div style="left:0px;top:0px;width:11px;height:1762px;background:#000;"></div>
<div style="left:2891px;top:0px;width:11px;height:1762px;background:#000;"></div>
</body></html>
